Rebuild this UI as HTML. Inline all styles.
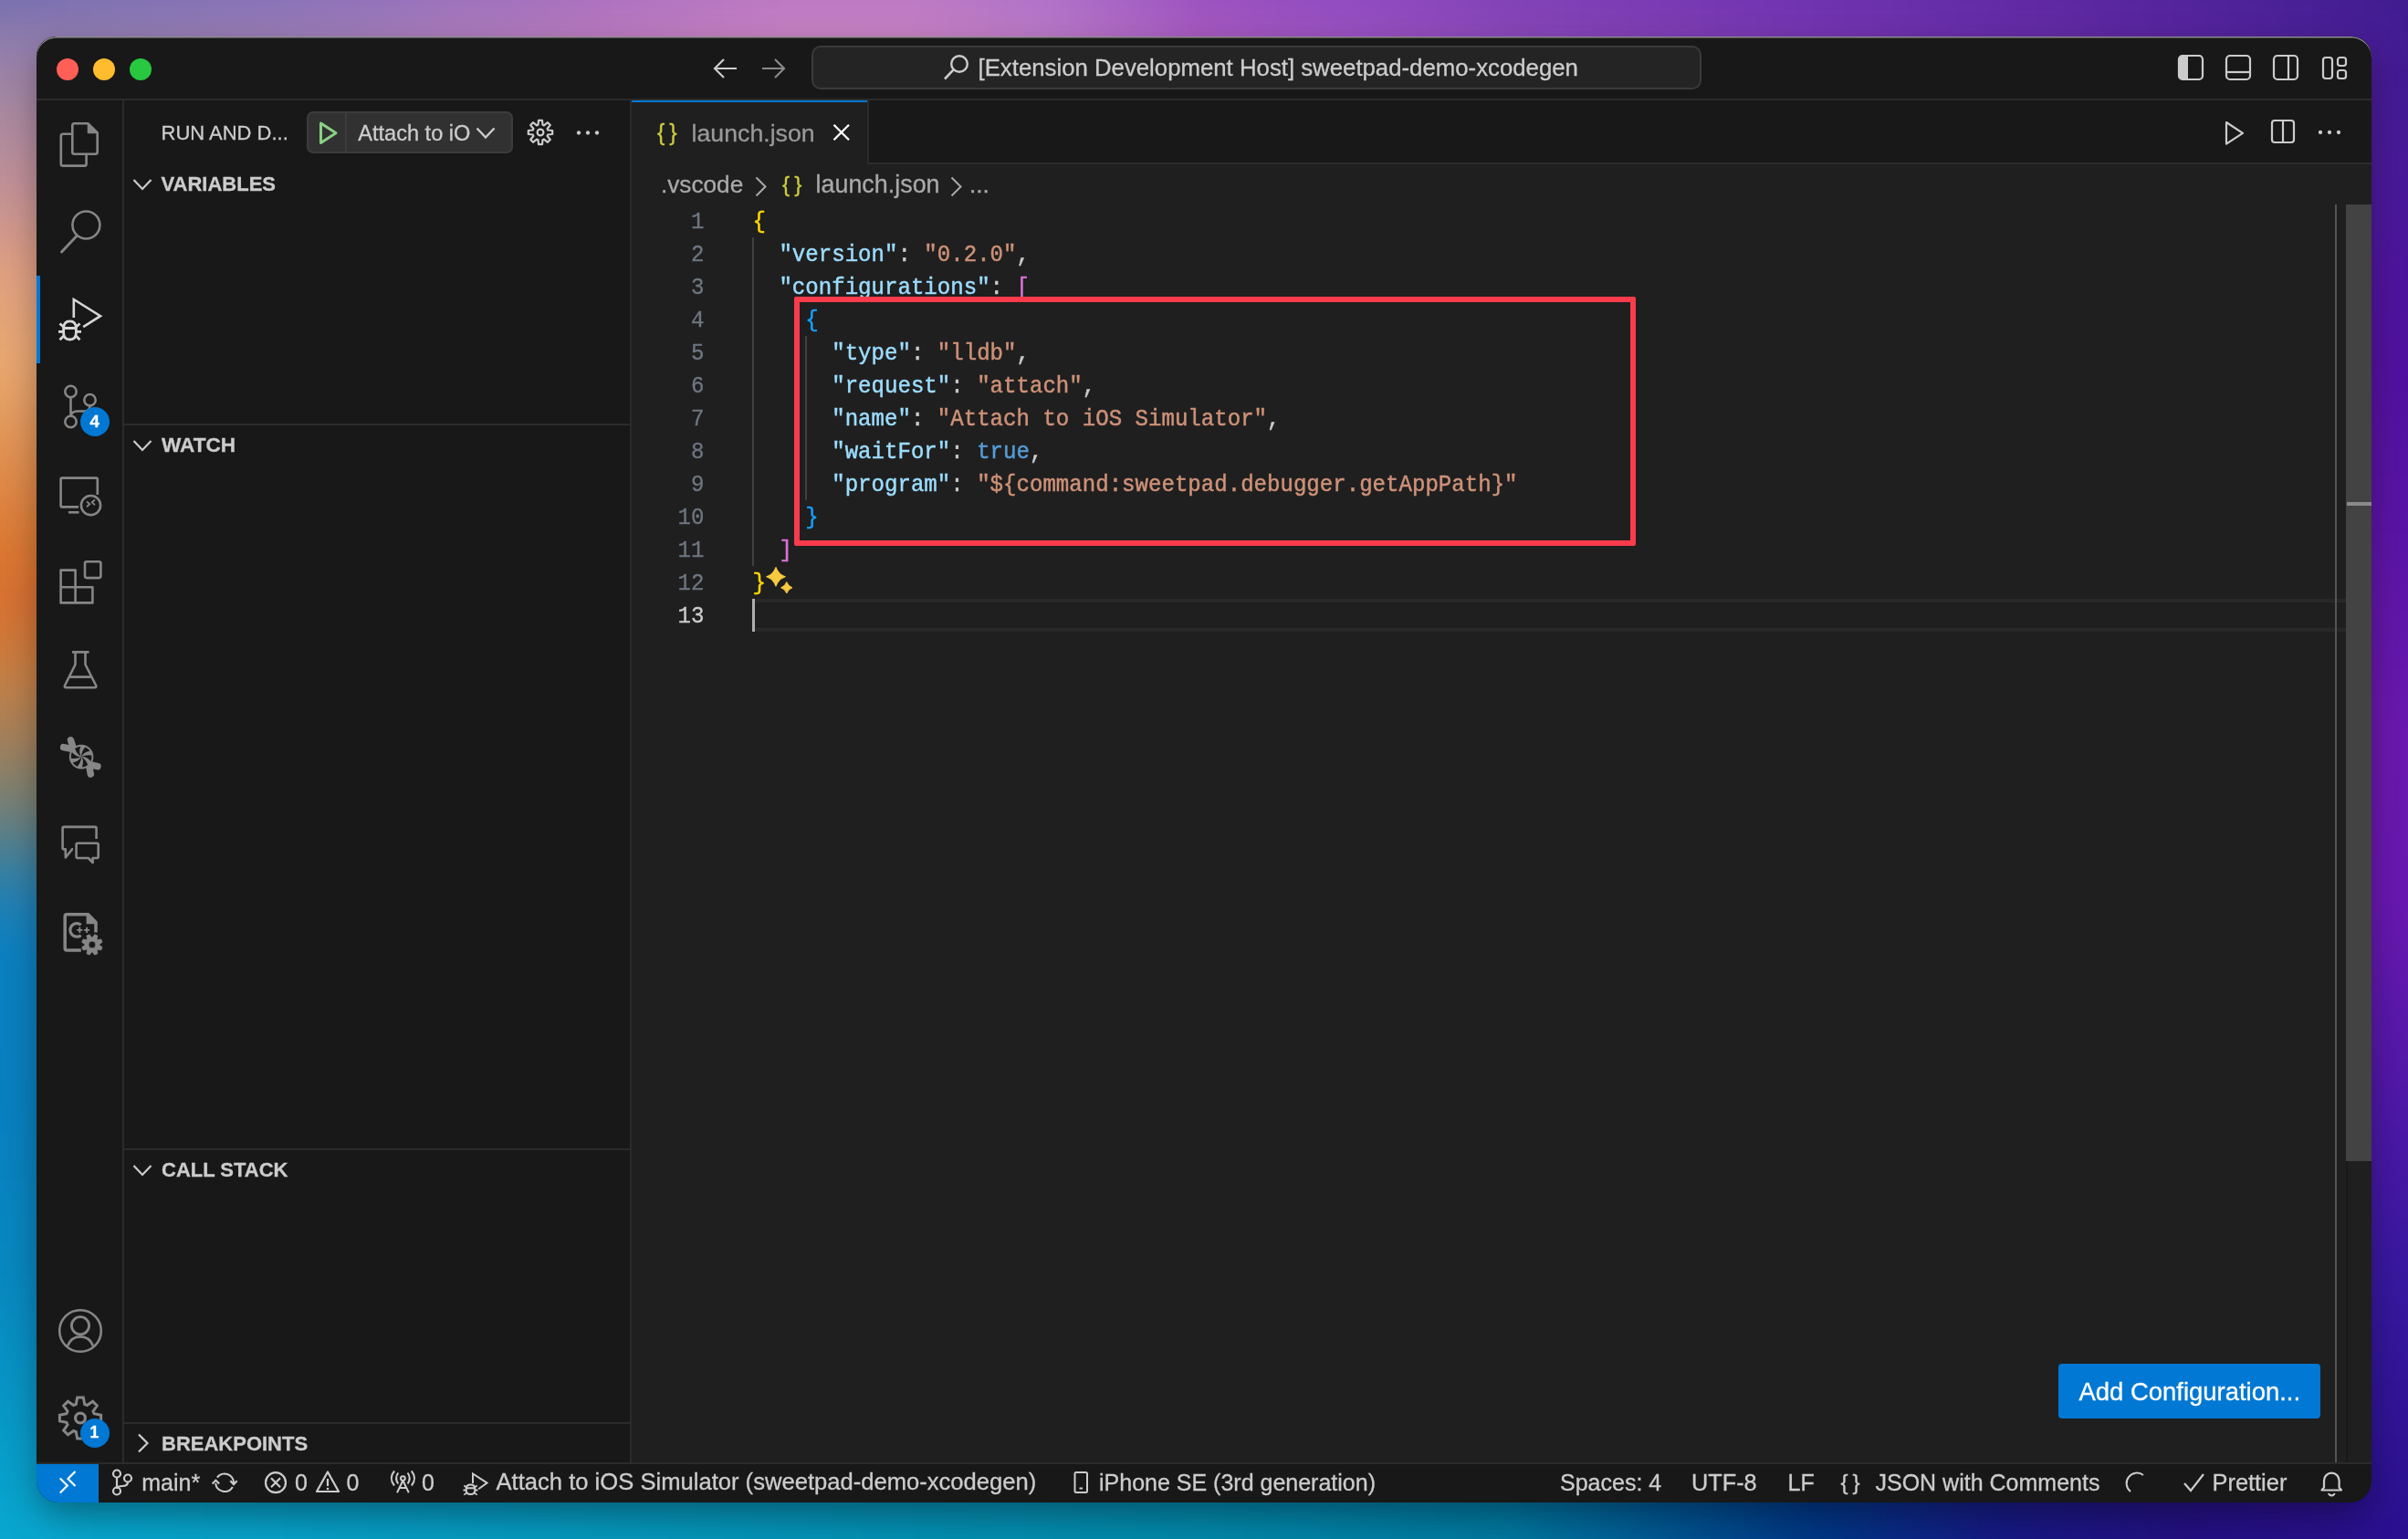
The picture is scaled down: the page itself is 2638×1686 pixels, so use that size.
<!DOCTYPE html><html><head><meta charset="utf-8"><style>html,body{margin:0;padding:0;width:2638px;height:1686px;overflow:hidden;background:#181818}*{box-sizing:border-box}</style></head><body><div style="position:absolute;left:0;top:0;width:2638px;height:1686px;overflow:hidden;background:#601890;">
<svg style="position:absolute;left:-60px;top:-60px;filter:blur(14px)" width="2758" height="1806" viewBox="-60 -60 2758 1806" shape-rendering="crispEdges"><rect x="-48" y="-48" width="30" height="30" fill="#7870b0"/><rect x="-18" y="-48" width="30" height="30" fill="#7870b0"/><rect x="12" y="-48" width="30" height="30" fill="#7970b1"/><rect x="42" y="-48" width="30" height="30" fill="#7b70b1"/><rect x="72" y="-48" width="30" height="30" fill="#7d71b2"/><rect x="102" y="-48" width="30" height="30" fill="#7e71b3"/><rect x="132" y="-48" width="30" height="30" fill="#8071b4"/><rect x="162" y="-48" width="30" height="30" fill="#8271b4"/><rect x="192" y="-48" width="30" height="30" fill="#8372b5"/><rect x="222" y="-48" width="30" height="30" fill="#8572b6"/><rect x="252" y="-48" width="30" height="30" fill="#8772b6"/><rect x="282" y="-48" width="30" height="30" fill="#8872b7"/><rect x="312" y="-48" width="30" height="30" fill="#8a72b8"/><rect x="342" y="-48" width="30" height="30" fill="#8d72b9"/><rect x="372" y="-48" width="30" height="30" fill="#9072b9"/><rect x="402" y="-48" width="30" height="30" fill="#9372ba"/><rect x="432" y="-48" width="30" height="30" fill="#9672bb"/><rect x="462" y="-48" width="30" height="30" fill="#9972bc"/><rect x="492" y="-48" width="30" height="30" fill="#9c72bc"/><rect x="522" y="-48" width="30" height="30" fill="#9f72bd"/><rect x="552" y="-48" width="30" height="30" fill="#a271be"/><rect x="582" y="-48" width="30" height="30" fill="#a671be"/><rect x="612" y="-48" width="30" height="30" fill="#a971bf"/><rect x="642" y="-48" width="30" height="30" fill="#ac71c0"/><rect x="672" y="-48" width="30" height="30" fill="#ae72c1"/><rect x="702" y="-48" width="30" height="30" fill="#b173c1"/><rect x="732" y="-48" width="30" height="30" fill="#b375c2"/><rect x="762" y="-48" width="30" height="30" fill="#b676c2"/><rect x="792" y="-48" width="30" height="30" fill="#b877c3"/><rect x="822" y="-48" width="30" height="30" fill="#bb79c4"/><rect x="852" y="-48" width="30" height="30" fill="#bc79c4"/><rect x="882" y="-48" width="30" height="30" fill="#bc79c4"/><rect x="912" y="-48" width="30" height="30" fill="#bc79c4"/><rect x="942" y="-48" width="30" height="30" fill="#bc79c4"/><rect x="972" y="-48" width="30" height="30" fill="#bc79c4"/><rect x="1002" y="-48" width="30" height="30" fill="#bb79c4"/><rect x="1032" y="-48" width="30" height="30" fill="#b877c5"/><rect x="1062" y="-48" width="30" height="30" fill="#b676c6"/><rect x="1092" y="-48" width="30" height="30" fill="#b374c7"/><rect x="1122" y="-48" width="30" height="30" fill="#b172c8"/><rect x="1152" y="-48" width="30" height="30" fill="#ae6fc7"/><rect x="1182" y="-48" width="30" height="30" fill="#aa69c6"/><rect x="1212" y="-48" width="30" height="30" fill="#a763c4"/><rect x="1242" y="-48" width="30" height="30" fill="#a35ec3"/><rect x="1272" y="-48" width="30" height="30" fill="#a058c2"/><rect x="1302" y="-48" width="30" height="30" fill="#9c53c0"/><rect x="1332" y="-48" width="30" height="30" fill="#9a51c0"/><rect x="1362" y="-48" width="30" height="30" fill="#9850c0"/><rect x="1392" y="-48" width="30" height="30" fill="#964ec0"/><rect x="1422" y="-48" width="30" height="30" fill="#944dc0"/><rect x="1452" y="-48" width="30" height="30" fill="#924cc0"/><rect x="1482" y="-48" width="30" height="30" fill="#904ac0"/><rect x="1512" y="-48" width="30" height="30" fill="#8d49bf"/><rect x="1542" y="-48" width="30" height="30" fill="#8b47bd"/><rect x="1572" y="-48" width="30" height="30" fill="#8846bb"/><rect x="1602" y="-48" width="30" height="30" fill="#8544ba"/><rect x="1632" y="-48" width="30" height="30" fill="#8243b8"/><rect x="1662" y="-48" width="30" height="30" fill="#8141b7"/><rect x="1692" y="-48" width="30" height="30" fill="#7f40b7"/><rect x="1722" y="-48" width="30" height="30" fill="#7d3eb6"/><rect x="1752" y="-48" width="30" height="30" fill="#7c3db5"/><rect x="1782" y="-48" width="30" height="30" fill="#7a3cb4"/><rect x="1812" y="-48" width="30" height="30" fill="#783ab4"/><rect x="1842" y="-48" width="30" height="30" fill="#7739b3"/><rect x="1872" y="-48" width="30" height="30" fill="#7537b2"/><rect x="1902" y="-48" width="30" height="30" fill="#7336b2"/><rect x="1932" y="-48" width="30" height="30" fill="#7235b1"/><rect x="1962" y="-48" width="30" height="30" fill="#7033b0"/><rect x="1992" y="-48" width="30" height="30" fill="#6e32af"/><rect x="2022" y="-48" width="30" height="30" fill="#6c31ad"/><rect x="2052" y="-48" width="30" height="30" fill="#6a30ac"/><rect x="2082" y="-48" width="30" height="30" fill="#682faa"/><rect x="2112" y="-48" width="30" height="30" fill="#662ea9"/><rect x="2142" y="-48" width="30" height="30" fill="#642da7"/><rect x="2172" y="-48" width="30" height="30" fill="#622ca6"/><rect x="2202" y="-48" width="30" height="30" fill="#602aa4"/><rect x="2232" y="-48" width="30" height="30" fill="#5e29a3"/><rect x="2262" y="-48" width="30" height="30" fill="#5c28a1"/><rect x="2292" y="-48" width="30" height="30" fill="#5927a0"/><rect x="2322" y="-48" width="30" height="30" fill="#57269e"/><rect x="2352" y="-48" width="30" height="30" fill="#55259d"/><rect x="2382" y="-48" width="30" height="30" fill="#53249b"/><rect x="2412" y="-48" width="30" height="30" fill="#50239a"/><rect x="2442" y="-48" width="30" height="30" fill="#4e2299"/><rect x="2472" y="-48" width="30" height="30" fill="#4c2197"/><rect x="2502" y="-48" width="30" height="30" fill="#492096"/><rect x="2532" y="-48" width="30" height="30" fill="#471f94"/><rect x="2562" y="-48" width="30" height="30" fill="#451e93"/><rect x="2592" y="-48" width="30" height="30" fill="#421d91"/><rect x="2622" y="-48" width="30" height="30" fill="#401c90"/><rect x="2652" y="-48" width="30" height="30" fill="#401c90"/><rect x="2682" y="-48" width="30" height="30" fill="#401c90"/><rect x="-48" y="-18" width="30" height="30" fill="#7870b0"/><rect x="-18" y="-18" width="30" height="30" fill="#7870b0"/><rect x="12" y="-18" width="30" height="30" fill="#7970b1"/><rect x="42" y="-18" width="30" height="30" fill="#7b70b1"/><rect x="72" y="-18" width="30" height="30" fill="#7d71b2"/><rect x="102" y="-18" width="30" height="30" fill="#7e71b3"/><rect x="132" y="-18" width="30" height="30" fill="#8071b4"/><rect x="162" y="-18" width="30" height="30" fill="#8271b4"/><rect x="192" y="-18" width="30" height="30" fill="#8372b5"/><rect x="222" y="-18" width="30" height="30" fill="#8572b6"/><rect x="252" y="-18" width="30" height="30" fill="#8772b6"/><rect x="282" y="-18" width="30" height="30" fill="#8872b7"/><rect x="312" y="-18" width="30" height="30" fill="#8a72b8"/><rect x="342" y="-18" width="30" height="30" fill="#8d72b9"/><rect x="372" y="-18" width="30" height="30" fill="#9072b9"/><rect x="402" y="-18" width="30" height="30" fill="#9372ba"/><rect x="432" y="-18" width="30" height="30" fill="#9672bb"/><rect x="462" y="-18" width="30" height="30" fill="#9972bc"/><rect x="492" y="-18" width="30" height="30" fill="#9c72bc"/><rect x="522" y="-18" width="30" height="30" fill="#9f72bd"/><rect x="552" y="-18" width="30" height="30" fill="#a271be"/><rect x="582" y="-18" width="30" height="30" fill="#a671be"/><rect x="612" y="-18" width="30" height="30" fill="#a971bf"/><rect x="642" y="-18" width="30" height="30" fill="#ac71c0"/><rect x="672" y="-18" width="30" height="30" fill="#ae72c1"/><rect x="702" y="-18" width="30" height="30" fill="#b173c1"/><rect x="732" y="-18" width="30" height="30" fill="#b375c2"/><rect x="762" y="-18" width="30" height="30" fill="#b676c2"/><rect x="792" y="-18" width="30" height="30" fill="#b877c3"/><rect x="822" y="-18" width="30" height="30" fill="#bb79c4"/><rect x="852" y="-18" width="30" height="30" fill="#bc79c4"/><rect x="882" y="-18" width="30" height="30" fill="#bc79c4"/><rect x="912" y="-18" width="30" height="30" fill="#bc79c4"/><rect x="942" y="-18" width="30" height="30" fill="#bc79c4"/><rect x="972" y="-18" width="30" height="30" fill="#bc79c4"/><rect x="1002" y="-18" width="30" height="30" fill="#bb79c4"/><rect x="1032" y="-18" width="30" height="30" fill="#b877c5"/><rect x="1062" y="-18" width="30" height="30" fill="#b676c6"/><rect x="1092" y="-18" width="30" height="30" fill="#b374c7"/><rect x="1122" y="-18" width="30" height="30" fill="#b172c8"/><rect x="1152" y="-18" width="30" height="30" fill="#ae6fc7"/><rect x="1182" y="-18" width="30" height="30" fill="#aa69c6"/><rect x="1212" y="-18" width="30" height="30" fill="#a763c4"/><rect x="1242" y="-18" width="30" height="30" fill="#a35ec3"/><rect x="1272" y="-18" width="30" height="30" fill="#a058c2"/><rect x="1302" y="-18" width="30" height="30" fill="#9c53c0"/><rect x="1332" y="-18" width="30" height="30" fill="#9a51c0"/><rect x="1362" y="-18" width="30" height="30" fill="#9850c0"/><rect x="1392" y="-18" width="30" height="30" fill="#964ec0"/><rect x="1422" y="-18" width="30" height="30" fill="#944dc0"/><rect x="1452" y="-18" width="30" height="30" fill="#924cc0"/><rect x="1482" y="-18" width="30" height="30" fill="#904ac0"/><rect x="1512" y="-18" width="30" height="30" fill="#8d49bf"/><rect x="1542" y="-18" width="30" height="30" fill="#8b47bd"/><rect x="1572" y="-18" width="30" height="30" fill="#8846bb"/><rect x="1602" y="-18" width="30" height="30" fill="#8544ba"/><rect x="1632" y="-18" width="30" height="30" fill="#8243b8"/><rect x="1662" y="-18" width="30" height="30" fill="#8141b7"/><rect x="1692" y="-18" width="30" height="30" fill="#7f40b7"/><rect x="1722" y="-18" width="30" height="30" fill="#7d3eb6"/><rect x="1752" y="-18" width="30" height="30" fill="#7c3db5"/><rect x="1782" y="-18" width="30" height="30" fill="#7a3cb4"/><rect x="1812" y="-18" width="30" height="30" fill="#783ab4"/><rect x="1842" y="-18" width="30" height="30" fill="#7739b3"/><rect x="1872" y="-18" width="30" height="30" fill="#7537b2"/><rect x="1902" y="-18" width="30" height="30" fill="#7336b2"/><rect x="1932" y="-18" width="30" height="30" fill="#7235b1"/><rect x="1962" y="-18" width="30" height="30" fill="#7033b0"/><rect x="1992" y="-18" width="30" height="30" fill="#6e32af"/><rect x="2022" y="-18" width="30" height="30" fill="#6c31ad"/><rect x="2052" y="-18" width="30" height="30" fill="#6a30ac"/><rect x="2082" y="-18" width="30" height="30" fill="#682faa"/><rect x="2112" y="-18" width="30" height="30" fill="#662ea9"/><rect x="2142" y="-18" width="30" height="30" fill="#642da7"/><rect x="2172" y="-18" width="30" height="30" fill="#622ca6"/><rect x="2202" y="-18" width="30" height="30" fill="#602aa4"/><rect x="2232" y="-18" width="30" height="30" fill="#5e29a3"/><rect x="2262" y="-18" width="30" height="30" fill="#5c28a1"/><rect x="2292" y="-18" width="30" height="30" fill="#5927a0"/><rect x="2322" y="-18" width="30" height="30" fill="#57269e"/><rect x="2352" y="-18" width="30" height="30" fill="#55259d"/><rect x="2382" y="-18" width="30" height="30" fill="#53249b"/><rect x="2412" y="-18" width="30" height="30" fill="#50239a"/><rect x="2442" y="-18" width="30" height="30" fill="#4e2299"/><rect x="2472" y="-18" width="30" height="30" fill="#4c2197"/><rect x="2502" y="-18" width="30" height="30" fill="#492096"/><rect x="2532" y="-18" width="30" height="30" fill="#471f94"/><rect x="2562" y="-18" width="30" height="30" fill="#451e93"/><rect x="2592" y="-18" width="30" height="30" fill="#421d91"/><rect x="2622" y="-18" width="30" height="30" fill="#401c90"/><rect x="2652" y="-18" width="30" height="30" fill="#401c90"/><rect x="2682" y="-18" width="30" height="30" fill="#401c90"/><rect x="-48" y="12" width="30" height="30" fill="#8577ad"/><rect x="-18" y="12" width="30" height="30" fill="#8577ad"/><rect x="12" y="12" width="30" height="30" fill="#8677ae"/><rect x="42" y="12" width="30" height="30" fill="#8777af"/><rect x="72" y="12" width="30" height="30" fill="#8978af"/><rect x="102" y="12" width="30" height="30" fill="#8a78b0"/><rect x="132" y="12" width="30" height="30" fill="#8c78b1"/><rect x="162" y="12" width="30" height="30" fill="#8d78b2"/><rect x="192" y="12" width="30" height="30" fill="#8f78b2"/><rect x="222" y="12" width="30" height="30" fill="#9078b3"/><rect x="252" y="12" width="30" height="30" fill="#9278b4"/><rect x="282" y="12" width="30" height="30" fill="#9379b5"/><rect x="312" y="12" width="30" height="30" fill="#9579b6"/><rect x="342" y="12" width="30" height="30" fill="#9779b6"/><rect x="372" y="12" width="30" height="30" fill="#9a78b7"/><rect x="402" y="12" width="30" height="30" fill="#9d78b8"/><rect x="432" y="12" width="30" height="30" fill="#a078b9"/><rect x="462" y="12" width="30" height="30" fill="#a378b9"/><rect x="492" y="12" width="30" height="30" fill="#a677ba"/><rect x="522" y="12" width="30" height="30" fill="#a977bb"/><rect x="552" y="12" width="30" height="30" fill="#ac77bc"/><rect x="582" y="12" width="30" height="30" fill="#ae77bc"/><rect x="612" y="12" width="30" height="30" fill="#b177bd"/><rect x="642" y="12" width="30" height="30" fill="#b476be"/><rect x="672" y="12" width="30" height="30" fill="#b777be"/><rect x="702" y="12" width="30" height="30" fill="#b979bf"/><rect x="732" y="12" width="30" height="30" fill="#bb7ac0"/><rect x="762" y="12" width="30" height="30" fill="#be7bc0"/><rect x="792" y="12" width="30" height="30" fill="#c07cc1"/><rect x="822" y="12" width="30" height="30" fill="#c27dc2"/><rect x="852" y="12" width="30" height="30" fill="#c37ec2"/><rect x="882" y="12" width="30" height="30" fill="#c37ec2"/><rect x="912" y="12" width="30" height="30" fill="#c37ec2"/><rect x="942" y="12" width="30" height="30" fill="#c37ec2"/><rect x="972" y="12" width="30" height="30" fill="#c37ec2"/><rect x="1002" y="12" width="30" height="30" fill="#c17dc3"/><rect x="1032" y="12" width="30" height="30" fill="#bf7bc4"/><rect x="1062" y="12" width="30" height="30" fill="#bc7ac4"/><rect x="1092" y="12" width="30" height="30" fill="#ba78c5"/><rect x="1122" y="12" width="30" height="30" fill="#b776c6"/><rect x="1152" y="12" width="30" height="30" fill="#b472c6"/><rect x="1182" y="12" width="30" height="30" fill="#b06dc4"/><rect x="1212" y="12" width="30" height="30" fill="#ad67c3"/><rect x="1242" y="12" width="30" height="30" fill="#a962c2"/><rect x="1272" y="12" width="30" height="30" fill="#a55cc0"/><rect x="1302" y="12" width="30" height="30" fill="#a256bf"/><rect x="1332" y="12" width="30" height="30" fill="#a055bf"/><rect x="1362" y="12" width="30" height="30" fill="#9d53bf"/><rect x="1392" y="12" width="30" height="30" fill="#9b52bf"/><rect x="1422" y="12" width="30" height="30" fill="#9951bf"/><rect x="1452" y="12" width="30" height="30" fill="#974fbf"/><rect x="1482" y="12" width="30" height="30" fill="#954ebf"/><rect x="1512" y="12" width="30" height="30" fill="#924cbe"/><rect x="1542" y="12" width="30" height="30" fill="#8f4bbc"/><rect x="1572" y="12" width="30" height="30" fill="#8c49ba"/><rect x="1602" y="12" width="30" height="30" fill="#8947b9"/><rect x="1632" y="12" width="30" height="30" fill="#8646b7"/><rect x="1662" y="12" width="30" height="30" fill="#8544b7"/><rect x="1692" y="12" width="30" height="30" fill="#8343b6"/><rect x="1722" y="12" width="30" height="30" fill="#8141b5"/><rect x="1752" y="12" width="30" height="30" fill="#7f3fb4"/><rect x="1782" y="12" width="30" height="30" fill="#7e3eb4"/><rect x="1812" y="12" width="30" height="30" fill="#7c3cb3"/><rect x="1842" y="12" width="30" height="30" fill="#7a3bb2"/><rect x="1872" y="12" width="30" height="30" fill="#7839b2"/><rect x="1902" y="12" width="30" height="30" fill="#7738b1"/><rect x="1932" y="12" width="30" height="30" fill="#7536b0"/><rect x="1962" y="12" width="30" height="30" fill="#7335b0"/><rect x="1992" y="12" width="30" height="30" fill="#7133ae"/><rect x="2022" y="12" width="30" height="30" fill="#6f32ad"/><rect x="2052" y="12" width="30" height="30" fill="#6d31ab"/><rect x="2082" y="12" width="30" height="30" fill="#6b30aa"/><rect x="2112" y="12" width="30" height="30" fill="#682ea9"/><rect x="2142" y="12" width="30" height="30" fill="#662da7"/><rect x="2172" y="12" width="30" height="30" fill="#642ca6"/><rect x="2202" y="12" width="30" height="30" fill="#622ba4"/><rect x="2232" y="12" width="30" height="30" fill="#602aa3"/><rect x="2262" y="12" width="30" height="30" fill="#5e29a1"/><rect x="2292" y="12" width="30" height="30" fill="#5c27a0"/><rect x="2322" y="12" width="30" height="30" fill="#59269f"/><rect x="2352" y="12" width="30" height="30" fill="#57259d"/><rect x="2382" y="12" width="30" height="30" fill="#54249c"/><rect x="2412" y="12" width="30" height="30" fill="#52239b"/><rect x="2442" y="12" width="30" height="30" fill="#502299"/><rect x="2472" y="12" width="30" height="30" fill="#4d2198"/><rect x="2502" y="12" width="30" height="30" fill="#4b2097"/><rect x="2532" y="12" width="30" height="30" fill="#481f95"/><rect x="2562" y="12" width="30" height="30" fill="#461e94"/><rect x="2592" y="12" width="30" height="30" fill="#441d93"/><rect x="2622" y="12" width="30" height="30" fill="#411b91"/><rect x="2652" y="12" width="30" height="30" fill="#411b91"/><rect x="2682" y="12" width="30" height="30" fill="#411b91"/><rect x="-48" y="42" width="30" height="30" fill="#937faa"/><rect x="-18" y="42" width="30" height="30" fill="#937faa"/><rect x="12" y="42" width="30" height="30" fill="#947fab"/><rect x="42" y="42" width="30" height="30" fill="#957fac"/><rect x="72" y="42" width="30" height="30" fill="#967fad"/><rect x="102" y="42" width="30" height="30" fill="#987fad"/><rect x="132" y="42" width="30" height="30" fill="#997fae"/><rect x="162" y="42" width="30" height="30" fill="#9a7faf"/><rect x="192" y="42" width="30" height="30" fill="#9b7fb0"/><rect x="222" y="42" width="30" height="30" fill="#9d7fb0"/><rect x="252" y="42" width="30" height="30" fill="#9e80b1"/><rect x="282" y="42" width="30" height="30" fill="#9f80b2"/><rect x="312" y="42" width="30" height="30" fill="#a080b3"/><rect x="342" y="42" width="30" height="30" fill="#a37fb4"/><rect x="372" y="42" width="30" height="30" fill="#a67fb4"/><rect x="402" y="42" width="30" height="30" fill="#a87fb5"/><rect x="432" y="42" width="30" height="30" fill="#ab7eb6"/><rect x="462" y="42" width="30" height="30" fill="#ae7eb7"/><rect x="492" y="42" width="30" height="30" fill="#b07eb8"/><rect x="522" y="42" width="30" height="30" fill="#b37db8"/><rect x="552" y="42" width="30" height="30" fill="#b67db9"/><rect x="582" y="42" width="30" height="30" fill="#b87dba"/><rect x="612" y="42" width="30" height="30" fill="#bb7cbb"/><rect x="642" y="42" width="30" height="30" fill="#be7cbb"/><rect x="672" y="42" width="30" height="30" fill="#c07dbc"/><rect x="702" y="42" width="30" height="30" fill="#c27ebd"/><rect x="732" y="42" width="30" height="30" fill="#c47fbd"/><rect x="762" y="42" width="30" height="30" fill="#c680be"/><rect x="792" y="42" width="30" height="30" fill="#c881bf"/><rect x="822" y="42" width="30" height="30" fill="#ca82c0"/><rect x="852" y="42" width="30" height="30" fill="#cb83c0"/><rect x="882" y="42" width="30" height="30" fill="#cb83c0"/><rect x="912" y="42" width="30" height="30" fill="#cb83c0"/><rect x="942" y="42" width="30" height="30" fill="#ca82c0"/><rect x="972" y="42" width="30" height="30" fill="#ca82c0"/><rect x="1002" y="42" width="30" height="30" fill="#c881c1"/><rect x="1032" y="42" width="30" height="30" fill="#c680c2"/><rect x="1062" y="42" width="30" height="30" fill="#c37ec2"/><rect x="1092" y="42" width="30" height="30" fill="#c07cc3"/><rect x="1122" y="42" width="30" height="30" fill="#be7bc4"/><rect x="1152" y="42" width="30" height="30" fill="#ba77c4"/><rect x="1182" y="42" width="30" height="30" fill="#b771c2"/><rect x="1212" y="42" width="30" height="30" fill="#b36bc1"/><rect x="1242" y="42" width="30" height="30" fill="#af66c0"/><rect x="1272" y="42" width="30" height="30" fill="#ac60bf"/><rect x="1302" y="42" width="30" height="30" fill="#a85bbd"/><rect x="1332" y="42" width="30" height="30" fill="#a559bd"/><rect x="1362" y="42" width="30" height="30" fill="#a357bd"/><rect x="1392" y="42" width="30" height="30" fill="#a156bd"/><rect x="1422" y="42" width="30" height="30" fill="#9f54be"/><rect x="1452" y="42" width="30" height="30" fill="#9c53be"/><rect x="1482" y="42" width="30" height="30" fill="#9a52be"/><rect x="1512" y="42" width="30" height="30" fill="#9750bc"/><rect x="1542" y="42" width="30" height="30" fill="#944ebb"/><rect x="1572" y="42" width="30" height="30" fill="#914cb9"/><rect x="1602" y="42" width="30" height="30" fill="#8e4bb8"/><rect x="1632" y="42" width="30" height="30" fill="#8b49b7"/><rect x="1662" y="42" width="30" height="30" fill="#8947b6"/><rect x="1692" y="42" width="30" height="30" fill="#8746b5"/><rect x="1722" y="42" width="30" height="30" fill="#8544b4"/><rect x="1752" y="42" width="30" height="30" fill="#8342b4"/><rect x="1782" y="42" width="30" height="30" fill="#8240b3"/><rect x="1812" y="42" width="30" height="30" fill="#803fb2"/><rect x="1842" y="42" width="30" height="30" fill="#7e3db2"/><rect x="1872" y="42" width="30" height="30" fill="#7c3bb1"/><rect x="1902" y="42" width="30" height="30" fill="#7a3ab0"/><rect x="1932" y="42" width="30" height="30" fill="#7838b0"/><rect x="1962" y="42" width="30" height="30" fill="#7636af"/><rect x="1992" y="42" width="30" height="30" fill="#7435ae"/><rect x="2022" y="42" width="30" height="30" fill="#7233ac"/><rect x="2052" y="42" width="30" height="30" fill="#7032ab"/><rect x="2082" y="42" width="30" height="30" fill="#6d31aa"/><rect x="2112" y="42" width="30" height="30" fill="#6b2fa8"/><rect x="2142" y="42" width="30" height="30" fill="#692ea7"/><rect x="2172" y="42" width="30" height="30" fill="#672da6"/><rect x="2202" y="42" width="30" height="30" fill="#652ba4"/><rect x="2232" y="42" width="30" height="30" fill="#622aa3"/><rect x="2262" y="42" width="30" height="30" fill="#6029a2"/><rect x="2292" y="42" width="30" height="30" fill="#5e28a0"/><rect x="2322" y="42" width="30" height="30" fill="#5b269f"/><rect x="2352" y="42" width="30" height="30" fill="#59259e"/><rect x="2382" y="42" width="30" height="30" fill="#56249d"/><rect x="2412" y="42" width="30" height="30" fill="#54239b"/><rect x="2442" y="42" width="30" height="30" fill="#51229a"/><rect x="2472" y="42" width="30" height="30" fill="#4f2199"/><rect x="2502" y="42" width="30" height="30" fill="#4c1f98"/><rect x="2532" y="42" width="30" height="30" fill="#4a1e96"/><rect x="2562" y="42" width="30" height="30" fill="#471d95"/><rect x="2592" y="42" width="30" height="30" fill="#451c94"/><rect x="2622" y="42" width="30" height="30" fill="#421b93"/><rect x="2652" y="42" width="30" height="30" fill="#421b93"/><rect x="2682" y="42" width="30" height="30" fill="#421b93"/><rect x="-48" y="72" width="30" height="30" fill="#9d84a5"/><rect x="-18" y="72" width="30" height="30" fill="#9d84a5"/><rect x="12" y="72" width="30" height="30" fill="#9e84a6"/><rect x="42" y="72" width="30" height="30" fill="#9f84a7"/><rect x="72" y="72" width="30" height="30" fill="#a084a8"/><rect x="102" y="72" width="30" height="30" fill="#a184a9"/><rect x="132" y="72" width="30" height="30" fill="#a283aa"/><rect x="162" y="72" width="30" height="30" fill="#a483aa"/><rect x="192" y="72" width="30" height="30" fill="#a583ab"/><rect x="222" y="72" width="30" height="30" fill="#a683ac"/><rect x="252" y="72" width="30" height="30" fill="#a783ad"/><rect x="282" y="72" width="30" height="30" fill="#a883ae"/><rect x="312" y="72" width="30" height="30" fill="#a983af"/><rect x="342" y="72" width="30" height="30" fill="#ab83af"/><rect x="372" y="72" width="30" height="30" fill="#ae83b0"/><rect x="402" y="72" width="30" height="30" fill="#b082b1"/><rect x="432" y="72" width="30" height="30" fill="#b382b2"/><rect x="462" y="72" width="30" height="30" fill="#b582b3"/><rect x="492" y="72" width="30" height="30" fill="#b881b4"/><rect x="522" y="72" width="30" height="30" fill="#ba81b4"/><rect x="552" y="72" width="30" height="30" fill="#bd80b5"/><rect x="582" y="72" width="30" height="30" fill="#bf80b6"/><rect x="612" y="72" width="30" height="30" fill="#c280b7"/><rect x="642" y="72" width="30" height="30" fill="#c47fb8"/><rect x="672" y="72" width="30" height="30" fill="#c680b8"/><rect x="702" y="72" width="30" height="30" fill="#c881b9"/><rect x="732" y="72" width="30" height="30" fill="#ca82ba"/><rect x="762" y="72" width="30" height="30" fill="#cc83bb"/><rect x="792" y="72" width="30" height="30" fill="#ce84bb"/><rect x="822" y="72" width="30" height="30" fill="#d085bc"/><rect x="852" y="72" width="30" height="30" fill="#d185bd"/><rect x="882" y="72" width="30" height="30" fill="#d085bd"/><rect x="912" y="72" width="30" height="30" fill="#d085bd"/><rect x="942" y="72" width="30" height="30" fill="#cf85bd"/><rect x="972" y="72" width="30" height="30" fill="#cf85bd"/><rect x="1002" y="72" width="30" height="30" fill="#cd84be"/><rect x="1032" y="72" width="30" height="30" fill="#ca82bf"/><rect x="1062" y="72" width="30" height="30" fill="#c880bf"/><rect x="1092" y="72" width="30" height="30" fill="#c57ec0"/><rect x="1122" y="72" width="30" height="30" fill="#c27dc1"/><rect x="1152" y="72" width="30" height="30" fill="#bf79c1"/><rect x="1182" y="72" width="30" height="30" fill="#bb73c0"/><rect x="1212" y="72" width="30" height="30" fill="#b76ebf"/><rect x="1242" y="72" width="30" height="30" fill="#b468bd"/><rect x="1272" y="72" width="30" height="30" fill="#b063bc"/><rect x="1302" y="72" width="30" height="30" fill="#ac5dbb"/><rect x="1332" y="72" width="30" height="30" fill="#aa5bbb"/><rect x="1362" y="72" width="30" height="30" fill="#a75abb"/><rect x="1392" y="72" width="30" height="30" fill="#a558bb"/><rect x="1422" y="72" width="30" height="30" fill="#a357bb"/><rect x="1452" y="72" width="30" height="30" fill="#a055bc"/><rect x="1482" y="72" width="30" height="30" fill="#9e54bc"/><rect x="1512" y="72" width="30" height="30" fill="#9b52ba"/><rect x="1542" y="72" width="30" height="30" fill="#9850b9"/><rect x="1572" y="72" width="30" height="30" fill="#954eb8"/><rect x="1602" y="72" width="30" height="30" fill="#924db6"/><rect x="1632" y="72" width="30" height="30" fill="#8e4bb5"/><rect x="1662" y="72" width="30" height="30" fill="#8c49b4"/><rect x="1692" y="72" width="30" height="30" fill="#8a47b4"/><rect x="1722" y="72" width="30" height="30" fill="#8845b3"/><rect x="1752" y="72" width="30" height="30" fill="#8644b2"/><rect x="1782" y="72" width="30" height="30" fill="#8442b2"/><rect x="1812" y="72" width="30" height="30" fill="#8240b1"/><rect x="1842" y="72" width="30" height="30" fill="#803eb1"/><rect x="1872" y="72" width="30" height="30" fill="#7e3cb0"/><rect x="1902" y="72" width="30" height="30" fill="#7c3aaf"/><rect x="1932" y="72" width="30" height="30" fill="#7a39af"/><rect x="1962" y="72" width="30" height="30" fill="#7837ae"/><rect x="1992" y="72" width="30" height="30" fill="#7635ad"/><rect x="2022" y="72" width="30" height="30" fill="#7434ac"/><rect x="2052" y="72" width="30" height="30" fill="#7232aa"/><rect x="2082" y="72" width="30" height="30" fill="#7031a9"/><rect x="2112" y="72" width="30" height="30" fill="#6d2fa8"/><rect x="2142" y="72" width="30" height="30" fill="#6b2ea7"/><rect x="2172" y="72" width="30" height="30" fill="#692da5"/><rect x="2202" y="72" width="30" height="30" fill="#672ba4"/><rect x="2232" y="72" width="30" height="30" fill="#642aa3"/><rect x="2262" y="72" width="30" height="30" fill="#6229a2"/><rect x="2292" y="72" width="30" height="30" fill="#6027a0"/><rect x="2322" y="72" width="30" height="30" fill="#5d269f"/><rect x="2352" y="72" width="30" height="30" fill="#5b259e"/><rect x="2382" y="72" width="30" height="30" fill="#58249d"/><rect x="2412" y="72" width="30" height="30" fill="#56229c"/><rect x="2442" y="72" width="30" height="30" fill="#53219b"/><rect x="2472" y="72" width="30" height="30" fill="#50209a"/><rect x="2502" y="72" width="30" height="30" fill="#4e1f99"/><rect x="2532" y="72" width="30" height="30" fill="#4b1e98"/><rect x="2562" y="72" width="30" height="30" fill="#491d97"/><rect x="2592" y="72" width="30" height="30" fill="#461b95"/><rect x="2622" y="72" width="30" height="30" fill="#441a94"/><rect x="2652" y="72" width="30" height="30" fill="#431a94"/><rect x="2682" y="72" width="30" height="30" fill="#431a94"/><rect x="-48" y="102" width="30" height="30" fill="#a788a0"/><rect x="-18" y="102" width="30" height="30" fill="#a788a0"/><rect x="12" y="102" width="30" height="30" fill="#a888a1"/><rect x="42" y="102" width="30" height="30" fill="#a987a2"/><rect x="72" y="102" width="30" height="30" fill="#aa87a3"/><rect x="2532" y="102" width="30" height="30" fill="#4d1d99"/><rect x="2562" y="102" width="30" height="30" fill="#4a1c98"/><rect x="2592" y="102" width="30" height="30" fill="#471b97"/><rect x="2622" y="102" width="30" height="30" fill="#451a96"/><rect x="2652" y="102" width="30" height="30" fill="#451a96"/><rect x="2682" y="102" width="30" height="30" fill="#451a96"/><rect x="-48" y="132" width="30" height="30" fill="#b08b9d"/><rect x="-18" y="132" width="30" height="30" fill="#b08b9d"/><rect x="12" y="132" width="30" height="30" fill="#b18b9e"/><rect x="42" y="132" width="30" height="30" fill="#b28a9f"/><rect x="72" y="132" width="30" height="30" fill="#b28aa0"/><rect x="2532" y="132" width="30" height="30" fill="#4e1d9a"/><rect x="2562" y="132" width="30" height="30" fill="#4b1c99"/><rect x="2592" y="132" width="30" height="30" fill="#491a98"/><rect x="2622" y="132" width="30" height="30" fill="#461997"/><rect x="2652" y="132" width="30" height="30" fill="#461997"/><rect x="2682" y="132" width="30" height="30" fill="#461997"/><rect x="-48" y="162" width="30" height="30" fill="#b98e9a"/><rect x="-18" y="162" width="30" height="30" fill="#b98e9a"/><rect x="12" y="162" width="30" height="30" fill="#ba8e9b"/><rect x="42" y="162" width="30" height="30" fill="#ba8d9c"/><rect x="72" y="162" width="30" height="30" fill="#bb8d9d"/><rect x="2532" y="162" width="30" height="30" fill="#4f1c9b"/><rect x="2562" y="162" width="30" height="30" fill="#4d1b9a"/><rect x="2592" y="162" width="30" height="30" fill="#4a1a9a"/><rect x="2622" y="162" width="30" height="30" fill="#471999"/><rect x="2652" y="162" width="30" height="30" fill="#471899"/><rect x="2682" y="162" width="30" height="30" fill="#471899"/><rect x="-48" y="192" width="30" height="30" fill="#c29196"/><rect x="-18" y="192" width="30" height="30" fill="#c29196"/><rect x="12" y="192" width="30" height="30" fill="#c39197"/><rect x="42" y="192" width="30" height="30" fill="#c39198"/><rect x="72" y="192" width="30" height="30" fill="#c49099"/><rect x="2532" y="192" width="30" height="30" fill="#511b9c"/><rect x="2562" y="192" width="30" height="30" fill="#4e1a9b"/><rect x="2592" y="192" width="30" height="30" fill="#4b199b"/><rect x="2622" y="192" width="30" height="30" fill="#48189a"/><rect x="2652" y="192" width="30" height="30" fill="#48189a"/><rect x="2682" y="192" width="30" height="30" fill="#48189a"/><rect x="-48" y="222" width="30" height="30" fill="#cc968f"/><rect x="-18" y="222" width="30" height="30" fill="#cc968f"/><rect x="12" y="222" width="30" height="30" fill="#cc9690"/><rect x="42" y="222" width="30" height="30" fill="#cd9591"/><rect x="72" y="222" width="30" height="30" fill="#cd9592"/><rect x="2532" y="222" width="30" height="30" fill="#521a9c"/><rect x="2562" y="222" width="30" height="30" fill="#4f199c"/><rect x="2592" y="222" width="30" height="30" fill="#4c189c"/><rect x="2622" y="222" width="30" height="30" fill="#4a179b"/><rect x="2652" y="222" width="30" height="30" fill="#49179b"/><rect x="2682" y="222" width="30" height="30" fill="#49179b"/><rect x="-48" y="252" width="30" height="30" fill="#d59b88"/><rect x="-18" y="252" width="30" height="30" fill="#d59b88"/><rect x="12" y="252" width="30" height="30" fill="#d69a89"/><rect x="42" y="252" width="30" height="30" fill="#d69a8a"/><rect x="72" y="252" width="30" height="30" fill="#d69a8b"/><rect x="2532" y="252" width="30" height="30" fill="#54199d"/><rect x="2562" y="252" width="30" height="30" fill="#51189d"/><rect x="2592" y="252" width="30" height="30" fill="#4e179c"/><rect x="2622" y="252" width="30" height="30" fill="#4b159c"/><rect x="2652" y="252" width="30" height="30" fill="#4b159c"/><rect x="2682" y="252" width="30" height="30" fill="#4b159c"/><rect x="-48" y="282" width="30" height="30" fill="#dfa081"/><rect x="-18" y="282" width="30" height="30" fill="#dfa081"/><rect x="12" y="282" width="30" height="30" fill="#df9f82"/><rect x="42" y="282" width="30" height="30" fill="#df9f83"/><rect x="72" y="282" width="30" height="30" fill="#df9e84"/><rect x="2532" y="282" width="30" height="30" fill="#55189d"/><rect x="2562" y="282" width="30" height="30" fill="#52179d"/><rect x="2592" y="282" width="30" height="30" fill="#4f159d"/><rect x="2622" y="282" width="30" height="30" fill="#4c149d"/><rect x="2652" y="282" width="30" height="30" fill="#4c149d"/><rect x="2682" y="282" width="30" height="30" fill="#4c149d"/><rect x="-48" y="312" width="30" height="30" fill="#e2a27c"/><rect x="-18" y="312" width="30" height="30" fill="#e2a27c"/><rect x="12" y="312" width="30" height="30" fill="#e2a27d"/><rect x="42" y="312" width="30" height="30" fill="#e2a17e"/><rect x="72" y="312" width="30" height="30" fill="#e2a17f"/><rect x="2532" y="312" width="30" height="30" fill="#56179e"/><rect x="2562" y="312" width="30" height="30" fill="#53169e"/><rect x="2592" y="312" width="30" height="30" fill="#50149e"/><rect x="2622" y="312" width="30" height="30" fill="#4d139e"/><rect x="2652" y="312" width="30" height="30" fill="#4d139e"/><rect x="2682" y="312" width="30" height="30" fill="#4d139e"/><rect x="-48" y="342" width="30" height="30" fill="#e5a577"/><rect x="-18" y="342" width="30" height="30" fill="#e5a577"/><rect x="12" y="342" width="30" height="30" fill="#e5a478"/><rect x="42" y="342" width="30" height="30" fill="#e4a479"/><rect x="72" y="342" width="30" height="30" fill="#e4a37b"/><rect x="2532" y="342" width="30" height="30" fill="#57169e"/><rect x="2562" y="342" width="30" height="30" fill="#54149e"/><rect x="2592" y="342" width="30" height="30" fill="#51139f"/><rect x="2622" y="342" width="30" height="30" fill="#4e129f"/><rect x="2652" y="342" width="30" height="30" fill="#4e129f"/><rect x="2682" y="342" width="30" height="30" fill="#4e129f"/><rect x="-48" y="372" width="30" height="30" fill="#e7a772"/><rect x="-18" y="372" width="30" height="30" fill="#e7a772"/><rect x="12" y="372" width="30" height="30" fill="#e7a673"/><rect x="42" y="372" width="30" height="30" fill="#e7a675"/><rect x="72" y="372" width="30" height="30" fill="#e7a576"/><rect x="2532" y="372" width="30" height="30" fill="#58159f"/><rect x="2562" y="372" width="30" height="30" fill="#55139f"/><rect x="2592" y="372" width="30" height="30" fill="#52129f"/><rect x="2622" y="372" width="30" height="30" fill="#5011a0"/><rect x="2652" y="372" width="30" height="30" fill="#4f11a0"/><rect x="2682" y="372" width="30" height="30" fill="#4f11a0"/><rect x="-48" y="402" width="30" height="30" fill="#e7a46b"/><rect x="-18" y="402" width="30" height="30" fill="#e7a46b"/><rect x="12" y="402" width="30" height="30" fill="#e7a36c"/><rect x="42" y="402" width="30" height="30" fill="#e6a36d"/><rect x="72" y="402" width="30" height="30" fill="#e6a26f"/><rect x="2532" y="402" width="30" height="30" fill="#59149f"/><rect x="2562" y="402" width="30" height="30" fill="#5713a0"/><rect x="2592" y="402" width="30" height="30" fill="#5412a0"/><rect x="2622" y="402" width="30" height="30" fill="#5110a1"/><rect x="2652" y="402" width="30" height="30" fill="#5110a1"/><rect x="2682" y="402" width="30" height="30" fill="#5110a1"/><rect x="-48" y="432" width="30" height="30" fill="#e49d61"/><rect x="-18" y="432" width="30" height="30" fill="#e49d61"/><rect x="12" y="432" width="30" height="30" fill="#e49c62"/><rect x="42" y="432" width="30" height="30" fill="#e49c64"/><rect x="72" y="432" width="30" height="30" fill="#e49b65"/><rect x="2532" y="432" width="30" height="30" fill="#5b15a0"/><rect x="2562" y="432" width="30" height="30" fill="#5813a1"/><rect x="2592" y="432" width="30" height="30" fill="#5512a1"/><rect x="2622" y="432" width="30" height="30" fill="#5211a2"/><rect x="2652" y="432" width="30" height="30" fill="#5211a2"/><rect x="2682" y="432" width="30" height="30" fill="#5211a2"/><rect x="-48" y="462" width="30" height="30" fill="#e29657"/><rect x="-18" y="462" width="30" height="30" fill="#e29657"/><rect x="12" y="462" width="30" height="30" fill="#e29559"/><rect x="42" y="462" width="30" height="30" fill="#e2955a"/><rect x="72" y="462" width="30" height="30" fill="#e1945c"/><rect x="2532" y="462" width="30" height="30" fill="#5c15a1"/><rect x="2562" y="462" width="30" height="30" fill="#5914a1"/><rect x="2592" y="462" width="30" height="30" fill="#5713a2"/><rect x="2622" y="462" width="30" height="30" fill="#5412a3"/><rect x="2652" y="462" width="30" height="30" fill="#5412a3"/><rect x="2682" y="462" width="30" height="30" fill="#5412a3"/><rect x="-48" y="492" width="30" height="30" fill="#e08e4e"/><rect x="-18" y="492" width="30" height="30" fill="#e08e4e"/><rect x="12" y="492" width="30" height="30" fill="#e08e4f"/><rect x="42" y="492" width="30" height="30" fill="#df8e51"/><rect x="72" y="492" width="30" height="30" fill="#df8d53"/><rect x="2532" y="492" width="30" height="30" fill="#5d15a1"/><rect x="2562" y="492" width="30" height="30" fill="#5b14a2"/><rect x="2592" y="492" width="30" height="30" fill="#5813a3"/><rect x="2622" y="492" width="30" height="30" fill="#5512a4"/><rect x="2652" y="492" width="30" height="30" fill="#5512a4"/><rect x="2682" y="492" width="30" height="30" fill="#5512a4"/><rect x="-48" y="522" width="30" height="30" fill="#df8745"/><rect x="-18" y="522" width="30" height="30" fill="#df8745"/><rect x="12" y="522" width="30" height="30" fill="#de8747"/><rect x="42" y="522" width="30" height="30" fill="#de8748"/><rect x="72" y="522" width="30" height="30" fill="#de874a"/><rect x="2532" y="522" width="30" height="30" fill="#5f15a2"/><rect x="2562" y="522" width="30" height="30" fill="#5c14a3"/><rect x="2592" y="522" width="30" height="30" fill="#5914a4"/><rect x="2622" y="522" width="30" height="30" fill="#5713a5"/><rect x="2652" y="522" width="30" height="30" fill="#5713a5"/><rect x="2682" y="522" width="30" height="30" fill="#5713a5"/><rect x="-48" y="552" width="30" height="30" fill="#dd803c"/><rect x="-18" y="552" width="30" height="30" fill="#dd803c"/><rect x="12" y="552" width="30" height="30" fill="#dd803e"/><rect x="42" y="552" width="30" height="30" fill="#dd803f"/><rect x="72" y="552" width="30" height="30" fill="#dd8041"/><rect x="2532" y="552" width="30" height="30" fill="#6015a3"/><rect x="2562" y="552" width="30" height="30" fill="#5d15a4"/><rect x="2592" y="552" width="30" height="30" fill="#5b14a5"/><rect x="2622" y="552" width="30" height="30" fill="#5813a7"/><rect x="2652" y="552" width="30" height="30" fill="#5813a7"/><rect x="2682" y="552" width="30" height="30" fill="#5813a7"/><rect x="-48" y="582" width="30" height="30" fill="#dc7933"/><rect x="-18" y="582" width="30" height="30" fill="#dc7933"/><rect x="12" y="582" width="30" height="30" fill="#dc7935"/><rect x="42" y="582" width="30" height="30" fill="#dc7937"/><rect x="72" y="582" width="30" height="30" fill="#dc7939"/><rect x="2532" y="582" width="30" height="30" fill="#6116a3"/><rect x="2562" y="582" width="30" height="30" fill="#5f15a5"/><rect x="2592" y="582" width="30" height="30" fill="#5c15a6"/><rect x="2622" y="582" width="30" height="30" fill="#5a14a8"/><rect x="2652" y="582" width="30" height="30" fill="#5a14a8"/><rect x="2682" y="582" width="30" height="30" fill="#5a14a8"/><rect x="-48" y="612" width="30" height="30" fill="#da7431"/><rect x="-18" y="612" width="30" height="30" fill="#da7431"/><rect x="12" y="612" width="30" height="30" fill="#da7433"/><rect x="42" y="612" width="30" height="30" fill="#d97435"/><rect x="72" y="612" width="30" height="30" fill="#d97437"/><rect x="2532" y="612" width="30" height="30" fill="#6316a4"/><rect x="2562" y="612" width="30" height="30" fill="#6116a6"/><rect x="2592" y="612" width="30" height="30" fill="#5f15a7"/><rect x="2622" y="612" width="30" height="30" fill="#5c15a9"/><rect x="2652" y="612" width="30" height="30" fill="#5c15a9"/><rect x="2682" y="612" width="30" height="30" fill="#5c15a9"/><rect x="-48" y="642" width="30" height="30" fill="#d77131"/><rect x="-18" y="642" width="30" height="30" fill="#d77131"/><rect x="12" y="642" width="30" height="30" fill="#d77133"/><rect x="42" y="642" width="30" height="30" fill="#d77135"/><rect x="72" y="642" width="30" height="30" fill="#d67137"/><rect x="2532" y="642" width="30" height="30" fill="#6516a5"/><rect x="2562" y="642" width="30" height="30" fill="#6316a7"/><rect x="2592" y="642" width="30" height="30" fill="#6116a8"/><rect x="2622" y="642" width="30" height="30" fill="#5f15aa"/><rect x="2652" y="642" width="30" height="30" fill="#5f15aa"/><rect x="2682" y="642" width="30" height="30" fill="#5f15aa"/><rect x="-48" y="672" width="30" height="30" fill="#d27636"/><rect x="-18" y="672" width="30" height="30" fill="#d27636"/><rect x="12" y="672" width="30" height="30" fill="#d27638"/><rect x="42" y="672" width="30" height="30" fill="#d2763a"/><rect x="72" y="672" width="30" height="30" fill="#d2763b"/><rect x="2532" y="672" width="30" height="30" fill="#6717a6"/><rect x="2562" y="672" width="30" height="30" fill="#6517a8"/><rect x="2592" y="672" width="30" height="30" fill="#6316aa"/><rect x="2622" y="672" width="30" height="30" fill="#6116ab"/><rect x="2652" y="672" width="30" height="30" fill="#6116ab"/><rect x="2682" y="672" width="30" height="30" fill="#6116ab"/><rect x="-48" y="702" width="30" height="30" fill="#cb7b3d"/><rect x="-18" y="702" width="30" height="30" fill="#cb7b3d"/><rect x="12" y="702" width="30" height="30" fill="#ca7b3f"/><rect x="42" y="702" width="30" height="30" fill="#ca7b41"/><rect x="72" y="702" width="30" height="30" fill="#ca7b43"/><rect x="2532" y="702" width="30" height="30" fill="#6918a7"/><rect x="2562" y="702" width="30" height="30" fill="#6717a9"/><rect x="2592" y="702" width="30" height="30" fill="#6517ab"/><rect x="2622" y="702" width="30" height="30" fill="#6316ad"/><rect x="2652" y="702" width="30" height="30" fill="#6316ad"/><rect x="2682" y="702" width="30" height="30" fill="#6316ad"/><rect x="-48" y="732" width="30" height="30" fill="#c18047"/><rect x="-18" y="732" width="30" height="30" fill="#c18047"/><rect x="12" y="732" width="30" height="30" fill="#c17f49"/><rect x="42" y="732" width="30" height="30" fill="#c17f4a"/><rect x="72" y="732" width="30" height="30" fill="#c17f4c"/><rect x="2532" y="732" width="30" height="30" fill="#6b18a9"/><rect x="2562" y="732" width="30" height="30" fill="#6918aa"/><rect x="2592" y="732" width="30" height="30" fill="#6817ac"/><rect x="2622" y="732" width="30" height="30" fill="#6617ae"/><rect x="2652" y="732" width="30" height="30" fill="#6617ae"/><rect x="2682" y="732" width="30" height="30" fill="#6617ae"/><rect x="-48" y="762" width="30" height="30" fill="#b38051"/><rect x="-18" y="762" width="30" height="30" fill="#b38051"/><rect x="12" y="762" width="30" height="30" fill="#b38052"/><rect x="42" y="762" width="30" height="30" fill="#b38054"/><rect x="72" y="762" width="30" height="30" fill="#b38055"/><rect x="2532" y="762" width="30" height="30" fill="#6d19aa"/><rect x="2562" y="762" width="30" height="30" fill="#6b18ac"/><rect x="2592" y="762" width="30" height="30" fill="#6a18ad"/><rect x="2622" y="762" width="30" height="30" fill="#6818af"/><rect x="2652" y="762" width="30" height="30" fill="#6818af"/><rect x="2682" y="762" width="30" height="30" fill="#6818af"/><rect x="-48" y="792" width="30" height="30" fill="#a4805a"/><rect x="-18" y="792" width="30" height="30" fill="#a4805a"/><rect x="12" y="792" width="30" height="30" fill="#a4805c"/><rect x="42" y="792" width="30" height="30" fill="#a4805d"/><rect x="72" y="792" width="30" height="30" fill="#a5805e"/><rect x="2532" y="792" width="30" height="30" fill="#6e19ab"/><rect x="2562" y="792" width="30" height="30" fill="#6d19ad"/><rect x="2592" y="792" width="30" height="30" fill="#6b18ae"/><rect x="2622" y="792" width="30" height="30" fill="#6a18b0"/><rect x="2652" y="792" width="30" height="30" fill="#6a18b0"/><rect x="2682" y="792" width="30" height="30" fill="#6a18b0"/><rect x="-48" y="822" width="30" height="30" fill="#928064"/><rect x="-18" y="822" width="30" height="30" fill="#928064"/><rect x="12" y="822" width="30" height="30" fill="#928065"/><rect x="42" y="822" width="30" height="30" fill="#938066"/><rect x="72" y="822" width="30" height="30" fill="#938068"/><rect x="2532" y="822" width="30" height="30" fill="#6d19ab"/><rect x="2562" y="822" width="30" height="30" fill="#6c19ad"/><rect x="2592" y="822" width="30" height="30" fill="#6b18ae"/><rect x="2622" y="822" width="30" height="30" fill="#6a18b0"/><rect x="2652" y="822" width="30" height="30" fill="#6a18b0"/><rect x="2682" y="822" width="30" height="30" fill="#6a18b0"/><rect x="-48" y="852" width="30" height="30" fill="#7e8070"/><rect x="-18" y="852" width="30" height="30" fill="#7e8070"/><rect x="12" y="852" width="30" height="30" fill="#7f8071"/><rect x="42" y="852" width="30" height="30" fill="#808072"/><rect x="72" y="852" width="30" height="30" fill="#808074"/><rect x="2532" y="852" width="30" height="30" fill="#6c19ab"/><rect x="2562" y="852" width="30" height="30" fill="#6b19ad"/><rect x="2592" y="852" width="30" height="30" fill="#6a18ae"/><rect x="2622" y="852" width="30" height="30" fill="#6918b0"/><rect x="2652" y="852" width="30" height="30" fill="#6918b0"/><rect x="2682" y="852" width="30" height="30" fill="#6918b0"/><rect x="-48" y="882" width="30" height="30" fill="#6a807f"/><rect x="-18" y="882" width="30" height="30" fill="#6a807f"/><rect x="12" y="882" width="30" height="30" fill="#6b807f"/><rect x="42" y="882" width="30" height="30" fill="#6b8080"/><rect x="72" y="882" width="30" height="30" fill="#6c8081"/><rect x="2532" y="882" width="30" height="30" fill="#6b19ac"/><rect x="2562" y="882" width="30" height="30" fill="#6a19ad"/><rect x="2592" y="882" width="30" height="30" fill="#6a18af"/><rect x="2622" y="882" width="30" height="30" fill="#6918b0"/><rect x="2652" y="882" width="30" height="30" fill="#6918b0"/><rect x="2682" y="882" width="30" height="30" fill="#6918b0"/><rect x="-48" y="912" width="30" height="30" fill="#4f8091"/><rect x="-18" y="912" width="30" height="30" fill="#4f8091"/><rect x="12" y="912" width="30" height="30" fill="#508092"/><rect x="42" y="912" width="30" height="30" fill="#518093"/><rect x="72" y="912" width="30" height="30" fill="#528093"/><rect x="2532" y="912" width="30" height="30" fill="#6919ac"/><rect x="2562" y="912" width="30" height="30" fill="#6919ad"/><rect x="2592" y="912" width="30" height="30" fill="#6918af"/><rect x="2622" y="912" width="30" height="30" fill="#6918b0"/><rect x="2652" y="912" width="30" height="30" fill="#6918b0"/><rect x="2682" y="912" width="30" height="30" fill="#6918b0"/><rect x="-48" y="942" width="30" height="30" fill="#3680a3"/><rect x="-18" y="942" width="30" height="30" fill="#3680a3"/><rect x="12" y="942" width="30" height="30" fill="#3780a4"/><rect x="42" y="942" width="30" height="30" fill="#3880a4"/><rect x="72" y="942" width="30" height="30" fill="#3980a5"/><rect x="2532" y="942" width="30" height="30" fill="#6819ad"/><rect x="2562" y="942" width="30" height="30" fill="#6818ae"/><rect x="2592" y="942" width="30" height="30" fill="#6818af"/><rect x="2622" y="942" width="30" height="30" fill="#6818b0"/><rect x="2652" y="942" width="30" height="30" fill="#6818b0"/><rect x="2682" y="942" width="30" height="30" fill="#6818b0"/><rect x="-48" y="972" width="30" height="30" fill="#2280b2"/><rect x="-18" y="972" width="30" height="30" fill="#2280b2"/><rect x="12" y="972" width="30" height="30" fill="#2480b2"/><rect x="42" y="972" width="30" height="30" fill="#2580b2"/><rect x="72" y="972" width="30" height="30" fill="#2680b3"/><rect x="2532" y="972" width="30" height="30" fill="#6719ad"/><rect x="2562" y="972" width="30" height="30" fill="#6718ae"/><rect x="2592" y="972" width="30" height="30" fill="#6818af"/><rect x="2622" y="972" width="30" height="30" fill="#6818b0"/><rect x="2652" y="972" width="30" height="30" fill="#6818b0"/><rect x="2682" y="972" width="30" height="30" fill="#6818b0"/><rect x="-48" y="1002" width="30" height="30" fill="#1580bb"/><rect x="-18" y="1002" width="30" height="30" fill="#1580bb"/><rect x="12" y="1002" width="30" height="30" fill="#1680bb"/><rect x="42" y="1002" width="30" height="30" fill="#1780bb"/><rect x="72" y="1002" width="30" height="30" fill="#1980bb"/><rect x="2532" y="1002" width="30" height="30" fill="#6419ac"/><rect x="2562" y="1002" width="30" height="30" fill="#6518ad"/><rect x="2592" y="1002" width="30" height="30" fill="#6518ae"/><rect x="2622" y="1002" width="30" height="30" fill="#6618af"/><rect x="2652" y="1002" width="30" height="30" fill="#6618af"/><rect x="2682" y="1002" width="30" height="30" fill="#6618af"/><rect x="-48" y="1032" width="30" height="30" fill="#0b80c0"/><rect x="-18" y="1032" width="30" height="30" fill="#0b80c0"/><rect x="12" y="1032" width="30" height="30" fill="#0c80c0"/><rect x="42" y="1032" width="30" height="30" fill="#0e80c0"/><rect x="72" y="1032" width="30" height="30" fill="#0f80c0"/><rect x="2532" y="1032" width="30" height="30" fill="#6018ab"/><rect x="2562" y="1032" width="30" height="30" fill="#6118ac"/><rect x="2592" y="1032" width="30" height="30" fill="#6218ad"/><rect x="2622" y="1032" width="30" height="30" fill="#6218ae"/><rect x="2652" y="1032" width="30" height="30" fill="#6218ae"/><rect x="2682" y="1032" width="30" height="30" fill="#6218ae"/><rect x="-48" y="1062" width="30" height="30" fill="#0a80c0"/><rect x="-18" y="1062" width="30" height="30" fill="#0a80c0"/><rect x="12" y="1062" width="30" height="30" fill="#0b80c0"/><rect x="42" y="1062" width="30" height="30" fill="#0c80c0"/><rect x="72" y="1062" width="30" height="30" fill="#0e80c0"/><rect x="2532" y="1062" width="30" height="30" fill="#5d18aa"/><rect x="2562" y="1062" width="30" height="30" fill="#5d18ab"/><rect x="2592" y="1062" width="30" height="30" fill="#5e18ac"/><rect x="2622" y="1062" width="30" height="30" fill="#5f18ad"/><rect x="2652" y="1062" width="30" height="30" fill="#5f18ad"/><rect x="2682" y="1062" width="30" height="30" fill="#5f18ad"/><rect x="-48" y="1092" width="30" height="30" fill="#0980c0"/><rect x="-18" y="1092" width="30" height="30" fill="#0980c0"/><rect x="12" y="1092" width="30" height="30" fill="#0a80c0"/><rect x="42" y="1092" width="30" height="30" fill="#0c80c0"/><rect x="72" y="1092" width="30" height="30" fill="#0d80c0"/><rect x="2532" y="1092" width="30" height="30" fill="#5918a8"/><rect x="2562" y="1092" width="30" height="30" fill="#5a18aa"/><rect x="2592" y="1092" width="30" height="30" fill="#5a18ab"/><rect x="2622" y="1092" width="30" height="30" fill="#5b18ac"/><rect x="2652" y="1092" width="30" height="30" fill="#5b18ac"/><rect x="2682" y="1092" width="30" height="30" fill="#5b18ac"/><rect x="-48" y="1122" width="30" height="30" fill="#0980c0"/><rect x="-18" y="1122" width="30" height="30" fill="#0980c0"/><rect x="12" y="1122" width="30" height="30" fill="#0a80c0"/><rect x="42" y="1122" width="30" height="30" fill="#0b80c0"/><rect x="72" y="1122" width="30" height="30" fill="#0d80c0"/><rect x="2532" y="1122" width="30" height="30" fill="#5618a7"/><rect x="2562" y="1122" width="30" height="30" fill="#5618a8"/><rect x="2592" y="1122" width="30" height="30" fill="#5718a9"/><rect x="2622" y="1122" width="30" height="30" fill="#5818aa"/><rect x="2652" y="1122" width="30" height="30" fill="#5818ab"/><rect x="2682" y="1122" width="30" height="30" fill="#5818ab"/><rect x="-48" y="1152" width="30" height="30" fill="#0880c0"/><rect x="-18" y="1152" width="30" height="30" fill="#0880c0"/><rect x="12" y="1152" width="30" height="30" fill="#0a80c0"/><rect x="42" y="1152" width="30" height="30" fill="#0b80c0"/><rect x="72" y="1152" width="30" height="30" fill="#0c80c0"/><rect x="2532" y="1152" width="30" height="30" fill="#5218a6"/><rect x="2562" y="1152" width="30" height="30" fill="#5318a7"/><rect x="2592" y="1152" width="30" height="30" fill="#5318a8"/><rect x="2622" y="1152" width="30" height="30" fill="#5418a9"/><rect x="2652" y="1152" width="30" height="30" fill="#5418a9"/><rect x="2682" y="1152" width="30" height="30" fill="#5418a9"/><rect x="-48" y="1182" width="30" height="30" fill="#0880c0"/><rect x="-18" y="1182" width="30" height="30" fill="#0880c0"/><rect x="12" y="1182" width="30" height="30" fill="#0980c0"/><rect x="42" y="1182" width="30" height="30" fill="#0a80c0"/><rect x="72" y="1182" width="30" height="30" fill="#0b80c0"/><rect x="2532" y="1182" width="30" height="30" fill="#4e18a4"/><rect x="2562" y="1182" width="30" height="30" fill="#4f18a6"/><rect x="2592" y="1182" width="30" height="30" fill="#5018a7"/><rect x="2622" y="1182" width="30" height="30" fill="#5018a8"/><rect x="2652" y="1182" width="30" height="30" fill="#5018a8"/><rect x="2682" y="1182" width="30" height="30" fill="#5018a8"/><rect x="-48" y="1212" width="30" height="30" fill="#0881c0"/><rect x="-18" y="1212" width="30" height="30" fill="#0881c0"/><rect x="12" y="1212" width="30" height="30" fill="#0981c0"/><rect x="42" y="1212" width="30" height="30" fill="#0a81c0"/><rect x="72" y="1212" width="30" height="30" fill="#0b81c0"/><rect x="2532" y="1212" width="30" height="30" fill="#4b18a3"/><rect x="2562" y="1212" width="30" height="30" fill="#4b18a4"/><rect x="2592" y="1212" width="30" height="30" fill="#4c18a6"/><rect x="2622" y="1212" width="30" height="30" fill="#4d18a7"/><rect x="2652" y="1212" width="30" height="30" fill="#4d18a7"/><rect x="2682" y="1212" width="30" height="30" fill="#4d18a7"/><rect x="-48" y="1242" width="30" height="30" fill="#0882c0"/><rect x="-18" y="1242" width="30" height="30" fill="#0882c0"/><rect x="12" y="1242" width="30" height="30" fill="#0982c0"/><rect x="42" y="1242" width="30" height="30" fill="#0a82c0"/><rect x="72" y="1242" width="30" height="30" fill="#0b82c0"/><rect x="2532" y="1242" width="30" height="30" fill="#4718a2"/><rect x="2562" y="1242" width="30" height="30" fill="#4818a3"/><rect x="2592" y="1242" width="30" height="30" fill="#4818a4"/><rect x="2622" y="1242" width="30" height="30" fill="#4918a6"/><rect x="2652" y="1242" width="30" height="30" fill="#4918a6"/><rect x="2682" y="1242" width="30" height="30" fill="#4918a6"/><rect x="-48" y="1272" width="30" height="30" fill="#0883c0"/><rect x="-18" y="1272" width="30" height="30" fill="#0883c0"/><rect x="12" y="1272" width="30" height="30" fill="#0983c0"/><rect x="42" y="1272" width="30" height="30" fill="#0a83c0"/><rect x="72" y="1272" width="30" height="30" fill="#0a83bf"/><rect x="2532" y="1272" width="30" height="30" fill="#4418a0"/><rect x="2562" y="1272" width="30" height="30" fill="#4418a2"/><rect x="2592" y="1272" width="30" height="30" fill="#4518a3"/><rect x="2622" y="1272" width="30" height="30" fill="#4618a4"/><rect x="2652" y="1272" width="30" height="30" fill="#4618a5"/><rect x="2682" y="1272" width="30" height="30" fill="#4618a5"/><rect x="-48" y="1302" width="30" height="30" fill="#0885c0"/><rect x="-18" y="1302" width="30" height="30" fill="#0885c0"/><rect x="12" y="1302" width="30" height="30" fill="#0985c0"/><rect x="42" y="1302" width="30" height="30" fill="#0984c0"/><rect x="72" y="1302" width="30" height="30" fill="#0a84bf"/><rect x="2532" y="1302" width="30" height="30" fill="#40189f"/><rect x="2562" y="1302" width="30" height="30" fill="#4118a0"/><rect x="2592" y="1302" width="30" height="30" fill="#4118a2"/><rect x="2622" y="1302" width="30" height="30" fill="#4218a3"/><rect x="2652" y="1302" width="30" height="30" fill="#4218a3"/><rect x="2682" y="1302" width="30" height="30" fill="#4218a3"/><rect x="-48" y="1332" width="30" height="30" fill="#0886c0"/><rect x="-18" y="1332" width="30" height="30" fill="#0886c0"/><rect x="12" y="1332" width="30" height="30" fill="#0986c0"/><rect x="42" y="1332" width="30" height="30" fill="#0985bf"/><rect x="72" y="1332" width="30" height="30" fill="#0a85bf"/><rect x="2532" y="1332" width="30" height="30" fill="#3c189e"/><rect x="2562" y="1332" width="30" height="30" fill="#3d189f"/><rect x="2592" y="1332" width="30" height="30" fill="#3e18a1"/><rect x="2622" y="1332" width="30" height="30" fill="#3e18a2"/><rect x="2652" y="1332" width="30" height="30" fill="#3e18a2"/><rect x="2682" y="1332" width="30" height="30" fill="#3e18a2"/><rect x="-48" y="1362" width="30" height="30" fill="#0887c0"/><rect x="-18" y="1362" width="30" height="30" fill="#0887c0"/><rect x="12" y="1362" width="30" height="30" fill="#0887c0"/><rect x="42" y="1362" width="30" height="30" fill="#0987bf"/><rect x="72" y="1362" width="30" height="30" fill="#0a86bf"/><rect x="2532" y="1362" width="30" height="30" fill="#39189c"/><rect x="2562" y="1362" width="30" height="30" fill="#39189e"/><rect x="2592" y="1362" width="30" height="30" fill="#3a189f"/><rect x="2622" y="1362" width="30" height="30" fill="#3b18a1"/><rect x="2652" y="1362" width="30" height="30" fill="#3b18a1"/><rect x="2682" y="1362" width="30" height="30" fill="#3b18a1"/><rect x="-48" y="1392" width="30" height="30" fill="#0889c0"/><rect x="-18" y="1392" width="30" height="30" fill="#0889c0"/><rect x="12" y="1392" width="30" height="30" fill="#0889c0"/><rect x="42" y="1392" width="30" height="30" fill="#0988c0"/><rect x="72" y="1392" width="30" height="30" fill="#0988bf"/><rect x="2532" y="1392" width="30" height="30" fill="#36179b"/><rect x="2562" y="1392" width="30" height="30" fill="#36189c"/><rect x="2592" y="1392" width="30" height="30" fill="#37189e"/><rect x="2622" y="1392" width="30" height="30" fill="#3818a0"/><rect x="2652" y="1392" width="30" height="30" fill="#3818a0"/><rect x="2682" y="1392" width="30" height="30" fill="#3818a0"/><rect x="-48" y="1422" width="30" height="30" fill="#088cc2"/><rect x="-18" y="1422" width="30" height="30" fill="#088cc2"/><rect x="12" y="1422" width="30" height="30" fill="#088cc2"/><rect x="42" y="1422" width="30" height="30" fill="#098bc1"/><rect x="72" y="1422" width="30" height="30" fill="#098bc1"/><rect x="2532" y="1422" width="30" height="30" fill="#341799"/><rect x="2562" y="1422" width="30" height="30" fill="#35179b"/><rect x="2592" y="1422" width="30" height="30" fill="#35179c"/><rect x="2622" y="1422" width="30" height="30" fill="#36179e"/><rect x="2652" y="1422" width="30" height="30" fill="#36179e"/><rect x="2682" y="1422" width="30" height="30" fill="#36179e"/><rect x="-48" y="1452" width="30" height="30" fill="#088fc4"/><rect x="-18" y="1452" width="30" height="30" fill="#088fc4"/><rect x="12" y="1452" width="30" height="30" fill="#088fc3"/><rect x="42" y="1452" width="30" height="30" fill="#098ec3"/><rect x="72" y="1452" width="30" height="30" fill="#098ec2"/><rect x="2532" y="1452" width="30" height="30" fill="#331697"/><rect x="2562" y="1452" width="30" height="30" fill="#331699"/><rect x="2592" y="1452" width="30" height="30" fill="#34169b"/><rect x="2622" y="1452" width="30" height="30" fill="#35169c"/><rect x="2652" y="1452" width="30" height="30" fill="#35169c"/><rect x="2682" y="1452" width="30" height="30" fill="#35169c"/><rect x="-48" y="1482" width="30" height="30" fill="#0892c5"/><rect x="-18" y="1482" width="30" height="30" fill="#0892c5"/><rect x="12" y="1482" width="30" height="30" fill="#0892c5"/><rect x="42" y="1482" width="30" height="30" fill="#0892c4"/><rect x="72" y="1482" width="30" height="30" fill="#0991c4"/><rect x="2532" y="1482" width="30" height="30" fill="#311596"/><rect x="2562" y="1482" width="30" height="30" fill="#321597"/><rect x="2592" y="1482" width="30" height="30" fill="#331599"/><rect x="2622" y="1482" width="30" height="30" fill="#33159b"/><rect x="2652" y="1482" width="30" height="30" fill="#33159b"/><rect x="2682" y="1482" width="30" height="30" fill="#33159b"/><rect x="-48" y="1512" width="30" height="30" fill="#0896c7"/><rect x="-18" y="1512" width="30" height="30" fill="#0896c7"/><rect x="12" y="1512" width="30" height="30" fill="#0895c6"/><rect x="42" y="1512" width="30" height="30" fill="#0895c6"/><rect x="72" y="1512" width="30" height="30" fill="#0994c5"/><rect x="2532" y="1512" width="30" height="30" fill="#301494"/><rect x="2562" y="1512" width="30" height="30" fill="#301495"/><rect x="2592" y="1512" width="30" height="30" fill="#311497"/><rect x="2622" y="1512" width="30" height="30" fill="#321499"/><rect x="2652" y="1512" width="30" height="30" fill="#321499"/><rect x="2682" y="1512" width="30" height="30" fill="#321499"/><rect x="-48" y="1542" width="30" height="30" fill="#0899c8"/><rect x="-18" y="1542" width="30" height="30" fill="#0899c8"/><rect x="12" y="1542" width="30" height="30" fill="#0898c8"/><rect x="42" y="1542" width="30" height="30" fill="#0898c7"/><rect x="72" y="1542" width="30" height="30" fill="#0897c7"/><rect x="2532" y="1542" width="30" height="30" fill="#2e1392"/><rect x="2562" y="1542" width="30" height="30" fill="#2f1394"/><rect x="2592" y="1542" width="30" height="30" fill="#301495"/><rect x="2622" y="1542" width="30" height="30" fill="#301497"/><rect x="2652" y="1542" width="30" height="30" fill="#301497"/><rect x="2682" y="1542" width="30" height="30" fill="#301497"/><rect x="-48" y="1572" width="30" height="30" fill="#089cca"/><rect x="-18" y="1572" width="30" height="30" fill="#089cca"/><rect x="12" y="1572" width="30" height="30" fill="#089cca"/><rect x="42" y="1572" width="30" height="30" fill="#089bc9"/><rect x="72" y="1572" width="30" height="30" fill="#089bc8"/><rect x="102" y="1572" width="30" height="30" fill="#089ac7"/><rect x="132" y="1572" width="30" height="30" fill="#089ac7"/><rect x="162" y="1572" width="30" height="30" fill="#0899c6"/><rect x="192" y="1572" width="30" height="30" fill="#0899c5"/><rect x="222" y="1572" width="30" height="30" fill="#0898c5"/><rect x="252" y="1572" width="30" height="30" fill="#0997c4"/><rect x="282" y="1572" width="30" height="30" fill="#0997c3"/><rect x="312" y="1572" width="30" height="30" fill="#0996c2"/><rect x="342" y="1572" width="30" height="30" fill="#0996c2"/><rect x="372" y="1572" width="30" height="30" fill="#0995c1"/><rect x="402" y="1572" width="30" height="30" fill="#0995c0"/><rect x="432" y="1572" width="30" height="30" fill="#0994c0"/><rect x="462" y="1572" width="30" height="30" fill="#0993bf"/><rect x="492" y="1572" width="30" height="30" fill="#0a93be"/><rect x="522" y="1572" width="30" height="30" fill="#0a92be"/><rect x="552" y="1572" width="30" height="30" fill="#0a92bd"/><rect x="582" y="1572" width="30" height="30" fill="#0a91bc"/><rect x="612" y="1572" width="30" height="30" fill="#0a91bb"/><rect x="642" y="1572" width="30" height="30" fill="#0a90bb"/><rect x="672" y="1572" width="30" height="30" fill="#0a90ba"/><rect x="702" y="1572" width="30" height="30" fill="#0b8fb9"/><rect x="732" y="1572" width="30" height="30" fill="#0b8fb9"/><rect x="762" y="1572" width="30" height="30" fill="#0b8eb8"/><rect x="792" y="1572" width="30" height="30" fill="#0b8eb7"/><rect x="822" y="1572" width="30" height="30" fill="#0b8db6"/><rect x="852" y="1572" width="30" height="30" fill="#0b8db6"/><rect x="882" y="1572" width="30" height="30" fill="#0b8cb5"/><rect x="912" y="1572" width="30" height="30" fill="#0b8bb4"/><rect x="942" y="1572" width="30" height="30" fill="#0b8bb3"/><rect x="972" y="1572" width="30" height="30" fill="#0b8ab3"/><rect x="1002" y="1572" width="30" height="30" fill="#0b8ab2"/><rect x="1032" y="1572" width="30" height="30" fill="#0b89b1"/><rect x="1062" y="1572" width="30" height="30" fill="#0a88b1"/><rect x="1092" y="1572" width="30" height="30" fill="#0a88b0"/><rect x="1122" y="1572" width="30" height="30" fill="#0a87af"/><rect x="1152" y="1572" width="30" height="30" fill="#0a86ae"/><rect x="1182" y="1572" width="30" height="30" fill="#0a85ae"/><rect x="1212" y="1572" width="30" height="30" fill="#0984ad"/><rect x="1242" y="1572" width="30" height="30" fill="#0984ac"/><rect x="1272" y="1572" width="30" height="30" fill="#0983ab"/><rect x="1302" y="1572" width="30" height="30" fill="#0982aa"/><rect x="1332" y="1572" width="30" height="30" fill="#0880aa"/><rect x="1362" y="1572" width="30" height="30" fill="#087fa9"/><rect x="1392" y="1572" width="30" height="30" fill="#087ea8"/><rect x="1422" y="1572" width="30" height="30" fill="#087da7"/><rect x="1452" y="1572" width="30" height="30" fill="#087ba7"/><rect x="1482" y="1572" width="30" height="30" fill="#087aa6"/><rect x="1512" y="1572" width="30" height="30" fill="#0779a5"/><rect x="1542" y="1572" width="30" height="30" fill="#0777a4"/><rect x="1572" y="1572" width="30" height="30" fill="#0776a3"/><rect x="1602" y="1572" width="30" height="30" fill="#0774a2"/><rect x="1632" y="1572" width="30" height="30" fill="#0773a2"/><rect x="1662" y="1572" width="30" height="30" fill="#076ea0"/><rect x="1692" y="1572" width="30" height="30" fill="#06699d"/><rect x="1722" y="1572" width="30" height="30" fill="#06639b"/><rect x="1752" y="1572" width="30" height="30" fill="#065e99"/><rect x="1782" y="1572" width="30" height="30" fill="#065897"/><rect x="1812" y="1572" width="30" height="30" fill="#065395"/><rect x="1842" y="1572" width="30" height="30" fill="#064d93"/><rect x="1872" y="1572" width="30" height="30" fill="#064890"/><rect x="1902" y="1572" width="30" height="30" fill="#06438e"/><rect x="1932" y="1572" width="30" height="30" fill="#053d8c"/><rect x="1962" y="1572" width="30" height="30" fill="#05388a"/><rect x="1992" y="1572" width="30" height="30" fill="#08348a"/><rect x="2022" y="1572" width="30" height="30" fill="#0b2f89"/><rect x="2052" y="1572" width="30" height="30" fill="#0e2b89"/><rect x="2082" y="1572" width="30" height="30" fill="#122789"/><rect x="2112" y="1572" width="30" height="30" fill="#152389"/><rect x="2142" y="1572" width="30" height="30" fill="#181f89"/><rect x="2172" y="1572" width="30" height="30" fill="#1b1b89"/><rect x="2202" y="1572" width="30" height="30" fill="#1e1989"/><rect x="2232" y="1572" width="30" height="30" fill="#1f1888"/><rect x="2262" y="1572" width="30" height="30" fill="#211788"/><rect x="2292" y="1572" width="30" height="30" fill="#231688"/><rect x="2322" y="1572" width="30" height="30" fill="#251588"/><rect x="2352" y="1572" width="30" height="30" fill="#271388"/><rect x="2382" y="1572" width="30" height="30" fill="#281288"/><rect x="2412" y="1572" width="30" height="30" fill="#291289"/><rect x="2442" y="1572" width="30" height="30" fill="#2a128b"/><rect x="2472" y="1572" width="30" height="30" fill="#2b128d"/><rect x="2502" y="1572" width="30" height="30" fill="#2c138e"/><rect x="2532" y="1572" width="30" height="30" fill="#2c1390"/><rect x="2562" y="1572" width="30" height="30" fill="#2d1392"/><rect x="2592" y="1572" width="30" height="30" fill="#2e1394"/><rect x="2622" y="1572" width="30" height="30" fill="#2f1395"/><rect x="2652" y="1572" width="30" height="30" fill="#2f1396"/><rect x="2682" y="1572" width="30" height="30" fill="#2f1396"/><rect x="-48" y="1602" width="30" height="30" fill="#08a0cc"/><rect x="-18" y="1602" width="30" height="30" fill="#08a0cc"/><rect x="12" y="1602" width="30" height="30" fill="#089fcb"/><rect x="42" y="1602" width="30" height="30" fill="#089fca"/><rect x="72" y="1602" width="30" height="30" fill="#089eca"/><rect x="102" y="1602" width="30" height="30" fill="#089ec9"/><rect x="132" y="1602" width="30" height="30" fill="#089dc8"/><rect x="162" y="1602" width="30" height="30" fill="#089cc7"/><rect x="192" y="1602" width="30" height="30" fill="#089cc7"/><rect x="222" y="1602" width="30" height="30" fill="#089bc6"/><rect x="252" y="1602" width="30" height="30" fill="#089ac5"/><rect x="282" y="1602" width="30" height="30" fill="#089ac4"/><rect x="312" y="1602" width="30" height="30" fill="#0899c4"/><rect x="342" y="1602" width="30" height="30" fill="#0899c3"/><rect x="372" y="1602" width="30" height="30" fill="#0898c2"/><rect x="402" y="1602" width="30" height="30" fill="#0897c1"/><rect x="432" y="1602" width="30" height="30" fill="#0897c1"/><rect x="462" y="1602" width="30" height="30" fill="#0896c0"/><rect x="492" y="1602" width="30" height="30" fill="#0896bf"/><rect x="522" y="1602" width="30" height="30" fill="#0895be"/><rect x="552" y="1602" width="30" height="30" fill="#0894bd"/><rect x="582" y="1602" width="30" height="30" fill="#0894bd"/><rect x="612" y="1602" width="30" height="30" fill="#0893bc"/><rect x="642" y="1602" width="30" height="30" fill="#0992bb"/><rect x="672" y="1602" width="30" height="30" fill="#0992ba"/><rect x="702" y="1602" width="30" height="30" fill="#0991ba"/><rect x="732" y="1602" width="30" height="30" fill="#0991b9"/><rect x="762" y="1602" width="30" height="30" fill="#0990b8"/><rect x="792" y="1602" width="30" height="30" fill="#0990b7"/><rect x="822" y="1602" width="30" height="30" fill="#098fb7"/><rect x="852" y="1602" width="30" height="30" fill="#098eb6"/><rect x="882" y="1602" width="30" height="30" fill="#098eb5"/><rect x="912" y="1602" width="30" height="30" fill="#098db4"/><rect x="942" y="1602" width="30" height="30" fill="#088db3"/><rect x="972" y="1602" width="30" height="30" fill="#088cb3"/><rect x="1002" y="1602" width="30" height="30" fill="#088bb2"/><rect x="1032" y="1602" width="30" height="30" fill="#088bb1"/><rect x="1062" y="1602" width="30" height="30" fill="#088ab0"/><rect x="1092" y="1602" width="30" height="30" fill="#0889af"/><rect x="1122" y="1602" width="30" height="30" fill="#0889af"/><rect x="1152" y="1602" width="30" height="30" fill="#0788ae"/><rect x="1182" y="1602" width="30" height="30" fill="#0787ad"/><rect x="1212" y="1602" width="30" height="30" fill="#0786ac"/><rect x="1242" y="1602" width="30" height="30" fill="#0785ab"/><rect x="1272" y="1602" width="30" height="30" fill="#0785aa"/><rect x="1302" y="1602" width="30" height="30" fill="#0684aa"/><rect x="1332" y="1602" width="30" height="30" fill="#0682a9"/><rect x="1362" y="1602" width="30" height="30" fill="#0681a8"/><rect x="1392" y="1602" width="30" height="30" fill="#0680a7"/><rect x="1422" y="1602" width="30" height="30" fill="#067ea6"/><rect x="1452" y="1602" width="30" height="30" fill="#067da6"/><rect x="1482" y="1602" width="30" height="30" fill="#057ca5"/><rect x="1512" y="1602" width="30" height="30" fill="#057aa4"/><rect x="1542" y="1602" width="30" height="30" fill="#0579a3"/><rect x="1572" y="1602" width="30" height="30" fill="#0577a2"/><rect x="1602" y="1602" width="30" height="30" fill="#0576a1"/><rect x="1632" y="1602" width="30" height="30" fill="#0475a1"/><rect x="1662" y="1602" width="30" height="30" fill="#04709e"/><rect x="1692" y="1602" width="30" height="30" fill="#046a9c"/><rect x="1722" y="1602" width="30" height="30" fill="#04649a"/><rect x="1752" y="1602" width="30" height="30" fill="#045f98"/><rect x="1782" y="1602" width="30" height="30" fill="#045996"/><rect x="1812" y="1602" width="30" height="30" fill="#045493"/><rect x="1842" y="1602" width="30" height="30" fill="#034e91"/><rect x="1872" y="1602" width="30" height="30" fill="#03498f"/><rect x="1902" y="1602" width="30" height="30" fill="#03438d"/><rect x="1932" y="1602" width="30" height="30" fill="#033e8a"/><rect x="1962" y="1602" width="30" height="30" fill="#033888"/><rect x="1992" y="1602" width="30" height="30" fill="#063488"/><rect x="2022" y="1602" width="30" height="30" fill="#093088"/><rect x="2052" y="1602" width="30" height="30" fill="#0c2b88"/><rect x="2082" y="1602" width="30" height="30" fill="#102787"/><rect x="2112" y="1602" width="30" height="30" fill="#132387"/><rect x="2142" y="1602" width="30" height="30" fill="#161f87"/><rect x="2172" y="1602" width="30" height="30" fill="#191b87"/><rect x="2202" y="1602" width="30" height="30" fill="#1c1887"/><rect x="2232" y="1602" width="30" height="30" fill="#1e1787"/><rect x="2262" y="1602" width="30" height="30" fill="#1f1686"/><rect x="2292" y="1602" width="30" height="30" fill="#211586"/><rect x="2322" y="1602" width="30" height="30" fill="#231486"/><rect x="2352" y="1602" width="30" height="30" fill="#251386"/><rect x="2382" y="1602" width="30" height="30" fill="#271286"/><rect x="2412" y="1602" width="30" height="30" fill="#281287"/><rect x="2442" y="1602" width="30" height="30" fill="#291289"/><rect x="2472" y="1602" width="30" height="30" fill="#29128b"/><rect x="2502" y="1602" width="30" height="30" fill="#2a128d"/><rect x="2532" y="1602" width="30" height="30" fill="#2b128e"/><rect x="2562" y="1602" width="30" height="30" fill="#2c1290"/><rect x="2592" y="1602" width="30" height="30" fill="#2d1292"/><rect x="2622" y="1602" width="30" height="30" fill="#2d1294"/><rect x="2652" y="1602" width="30" height="30" fill="#2d1294"/><rect x="2682" y="1602" width="30" height="30" fill="#2d1294"/><rect x="-48" y="1632" width="30" height="30" fill="#08a3ce"/><rect x="-18" y="1632" width="30" height="30" fill="#08a3ce"/><rect x="12" y="1632" width="30" height="30" fill="#08a3cd"/><rect x="42" y="1632" width="30" height="30" fill="#08a2cc"/><rect x="72" y="1632" width="30" height="30" fill="#08a2cb"/><rect x="102" y="1632" width="30" height="30" fill="#08a1ca"/><rect x="132" y="1632" width="30" height="30" fill="#08a0ca"/><rect x="162" y="1632" width="30" height="30" fill="#08a0c9"/><rect x="192" y="1632" width="30" height="30" fill="#089fc8"/><rect x="222" y="1632" width="30" height="30" fill="#079ec7"/><rect x="252" y="1632" width="30" height="30" fill="#079ec6"/><rect x="282" y="1632" width="30" height="30" fill="#079dc5"/><rect x="312" y="1632" width="30" height="30" fill="#079cc5"/><rect x="342" y="1632" width="30" height="30" fill="#079cc4"/><rect x="372" y="1632" width="30" height="30" fill="#079bc3"/><rect x="402" y="1632" width="30" height="30" fill="#079ac2"/><rect x="432" y="1632" width="30" height="30" fill="#079ac1"/><rect x="462" y="1632" width="30" height="30" fill="#0799c1"/><rect x="492" y="1632" width="30" height="30" fill="#0798c0"/><rect x="522" y="1632" width="30" height="30" fill="#0798bf"/><rect x="552" y="1632" width="30" height="30" fill="#0797be"/><rect x="582" y="1632" width="30" height="30" fill="#0796bd"/><rect x="612" y="1632" width="30" height="30" fill="#0796bc"/><rect x="642" y="1632" width="30" height="30" fill="#0795bc"/><rect x="672" y="1632" width="30" height="30" fill="#0794bb"/><rect x="702" y="1632" width="30" height="30" fill="#0794ba"/><rect x="732" y="1632" width="30" height="30" fill="#0793b9"/><rect x="762" y="1632" width="30" height="30" fill="#0792b8"/><rect x="792" y="1632" width="30" height="30" fill="#0792b7"/><rect x="822" y="1632" width="30" height="30" fill="#0691b7"/><rect x="852" y="1632" width="30" height="30" fill="#0690b6"/><rect x="882" y="1632" width="30" height="30" fill="#0690b5"/><rect x="912" y="1632" width="30" height="30" fill="#068fb4"/><rect x="942" y="1632" width="30" height="30" fill="#068eb3"/><rect x="972" y="1632" width="30" height="30" fill="#068eb2"/><rect x="1002" y="1632" width="30" height="30" fill="#068db2"/><rect x="1032" y="1632" width="30" height="30" fill="#068cb1"/><rect x="1062" y="1632" width="30" height="30" fill="#058cb0"/><rect x="1092" y="1632" width="30" height="30" fill="#058baf"/><rect x="1122" y="1632" width="30" height="30" fill="#058aae"/><rect x="1152" y="1632" width="30" height="30" fill="#058aad"/><rect x="1182" y="1632" width="30" height="30" fill="#0589ac"/><rect x="1212" y="1632" width="30" height="30" fill="#0588ac"/><rect x="1242" y="1632" width="30" height="30" fill="#0487ab"/><rect x="1272" y="1632" width="30" height="30" fill="#0486aa"/><rect x="1302" y="1632" width="30" height="30" fill="#0486a9"/><rect x="1332" y="1632" width="30" height="30" fill="#0484a8"/><rect x="1362" y="1632" width="30" height="30" fill="#0483a7"/><rect x="1392" y="1632" width="30" height="30" fill="#0481a6"/><rect x="1422" y="1632" width="30" height="30" fill="#0380a6"/><rect x="1452" y="1632" width="30" height="30" fill="#037fa5"/><rect x="1482" y="1632" width="30" height="30" fill="#037da4"/><rect x="1512" y="1632" width="30" height="30" fill="#037ca3"/><rect x="1542" y="1632" width="30" height="30" fill="#037aa2"/><rect x="1572" y="1632" width="30" height="30" fill="#0379a1"/><rect x="1602" y="1632" width="30" height="30" fill="#0278a0"/><rect x="1632" y="1632" width="30" height="30" fill="#02769f"/><rect x="1662" y="1632" width="30" height="30" fill="#02719d"/><rect x="1692" y="1632" width="30" height="30" fill="#026b9b"/><rect x="1722" y="1632" width="30" height="30" fill="#026699"/><rect x="1752" y="1632" width="30" height="30" fill="#026096"/><rect x="1782" y="1632" width="30" height="30" fill="#015a94"/><rect x="1812" y="1632" width="30" height="30" fill="#015592"/><rect x="1842" y="1632" width="30" height="30" fill="#014f90"/><rect x="1872" y="1632" width="30" height="30" fill="#01498d"/><rect x="1902" y="1632" width="30" height="30" fill="#01448b"/><rect x="1932" y="1632" width="30" height="30" fill="#013e89"/><rect x="1962" y="1632" width="30" height="30" fill="#013886"/><rect x="1992" y="1632" width="30" height="30" fill="#043486"/><rect x="2022" y="1632" width="30" height="30" fill="#073086"/><rect x="2052" y="1632" width="30" height="30" fill="#0a2b86"/><rect x="2082" y="1632" width="30" height="30" fill="#0d2786"/><rect x="2112" y="1632" width="30" height="30" fill="#112385"/><rect x="2142" y="1632" width="30" height="30" fill="#141f85"/><rect x="2172" y="1632" width="30" height="30" fill="#171a85"/><rect x="2202" y="1632" width="30" height="30" fill="#1a1885"/><rect x="2232" y="1632" width="30" height="30" fill="#1c1785"/><rect x="2262" y="1632" width="30" height="30" fill="#1e1685"/><rect x="2292" y="1632" width="30" height="30" fill="#201484"/><rect x="2322" y="1632" width="30" height="30" fill="#211384"/><rect x="2352" y="1632" width="30" height="30" fill="#231284"/><rect x="2382" y="1632" width="30" height="30" fill="#251184"/><rect x="2412" y="1632" width="30" height="30" fill="#261186"/><rect x="2442" y="1632" width="30" height="30" fill="#271187"/><rect x="2472" y="1632" width="30" height="30" fill="#281189"/><rect x="2502" y="1632" width="30" height="30" fill="#29118b"/><rect x="2532" y="1632" width="30" height="30" fill="#29118d"/><rect x="2562" y="1632" width="30" height="30" fill="#2a118f"/><rect x="2592" y="1632" width="30" height="30" fill="#2b1190"/><rect x="2622" y="1632" width="30" height="30" fill="#2c1192"/><rect x="2652" y="1632" width="30" height="30" fill="#2c1192"/><rect x="2682" y="1632" width="30" height="30" fill="#2c1192"/><rect x="-48" y="1662" width="30" height="30" fill="#08a7cf"/><rect x="-18" y="1662" width="30" height="30" fill="#08a7cf"/><rect x="12" y="1662" width="30" height="30" fill="#08a6cf"/><rect x="42" y="1662" width="30" height="30" fill="#08a6ce"/><rect x="72" y="1662" width="30" height="30" fill="#08a5cd"/><rect x="102" y="1662" width="30" height="30" fill="#07a4cc"/><rect x="132" y="1662" width="30" height="30" fill="#07a3cb"/><rect x="162" y="1662" width="30" height="30" fill="#07a3ca"/><rect x="192" y="1662" width="30" height="30" fill="#07a2c9"/><rect x="222" y="1662" width="30" height="30" fill="#07a1c8"/><rect x="252" y="1662" width="30" height="30" fill="#07a1c8"/><rect x="282" y="1662" width="30" height="30" fill="#07a0c7"/><rect x="312" y="1662" width="30" height="30" fill="#069fc6"/><rect x="342" y="1662" width="30" height="30" fill="#069ec5"/><rect x="372" y="1662" width="30" height="30" fill="#069ec4"/><rect x="402" y="1662" width="30" height="30" fill="#069dc3"/><rect x="432" y="1662" width="30" height="30" fill="#069cc2"/><rect x="462" y="1662" width="30" height="30" fill="#069cc1"/><rect x="492" y="1662" width="30" height="30" fill="#069bc0"/><rect x="522" y="1662" width="30" height="30" fill="#069ac0"/><rect x="552" y="1662" width="30" height="30" fill="#0599bf"/><rect x="582" y="1662" width="30" height="30" fill="#0599be"/><rect x="612" y="1662" width="30" height="30" fill="#0598bd"/><rect x="642" y="1662" width="30" height="30" fill="#0597bc"/><rect x="672" y="1662" width="30" height="30" fill="#0597bb"/><rect x="702" y="1662" width="30" height="30" fill="#0596ba"/><rect x="732" y="1662" width="30" height="30" fill="#0595b9"/><rect x="762" y="1662" width="30" height="30" fill="#0495b8"/><rect x="792" y="1662" width="30" height="30" fill="#0494b8"/><rect x="822" y="1662" width="30" height="30" fill="#0493b7"/><rect x="852" y="1662" width="30" height="30" fill="#0492b6"/><rect x="882" y="1662" width="30" height="30" fill="#0492b5"/><rect x="912" y="1662" width="30" height="30" fill="#0491b4"/><rect x="942" y="1662" width="30" height="30" fill="#0490b3"/><rect x="972" y="1662" width="30" height="30" fill="#0390b2"/><rect x="1002" y="1662" width="30" height="30" fill="#038fb1"/><rect x="1032" y="1662" width="30" height="30" fill="#038eb0"/><rect x="1062" y="1662" width="30" height="30" fill="#038daf"/><rect x="1092" y="1662" width="30" height="30" fill="#038daf"/><rect x="1122" y="1662" width="30" height="30" fill="#038cae"/><rect x="1152" y="1662" width="30" height="30" fill="#038bad"/><rect x="1182" y="1662" width="30" height="30" fill="#028aac"/><rect x="1212" y="1662" width="30" height="30" fill="#028aab"/><rect x="1242" y="1662" width="30" height="30" fill="#0289aa"/><rect x="1272" y="1662" width="30" height="30" fill="#0288a9"/><rect x="1302" y="1662" width="30" height="30" fill="#0288a8"/><rect x="1332" y="1662" width="30" height="30" fill="#0286a7"/><rect x="1362" y="1662" width="30" height="30" fill="#0185a6"/><rect x="1392" y="1662" width="30" height="30" fill="#0183a6"/><rect x="1422" y="1662" width="30" height="30" fill="#0182a5"/><rect x="1452" y="1662" width="30" height="30" fill="#0180a4"/><rect x="1482" y="1662" width="30" height="30" fill="#017fa3"/><rect x="1512" y="1662" width="30" height="30" fill="#017da2"/><rect x="1542" y="1662" width="30" height="30" fill="#007ca1"/><rect x="1572" y="1662" width="30" height="30" fill="#007ba0"/><rect x="1602" y="1662" width="30" height="30" fill="#00799f"/><rect x="1632" y="1662" width="30" height="30" fill="#00789e"/><rect x="1662" y="1662" width="30" height="30" fill="#00729c"/><rect x="1692" y="1662" width="30" height="30" fill="#006d9a"/><rect x="1722" y="1662" width="30" height="30" fill="#006798"/><rect x="1752" y="1662" width="30" height="30" fill="#006195"/><rect x="1782" y="1662" width="30" height="30" fill="#005b93"/><rect x="1812" y="1662" width="30" height="30" fill="#005590"/><rect x="1842" y="1662" width="30" height="30" fill="#00508e"/><rect x="1872" y="1662" width="30" height="30" fill="#004a8c"/><rect x="1902" y="1662" width="30" height="30" fill="#004489"/><rect x="1932" y="1662" width="30" height="30" fill="#003e87"/><rect x="1962" y="1662" width="30" height="30" fill="#003985"/><rect x="1992" y="1662" width="30" height="30" fill="#013484"/><rect x="2022" y="1662" width="30" height="30" fill="#053084"/><rect x="2052" y="1662" width="30" height="30" fill="#082b84"/><rect x="2082" y="1662" width="30" height="30" fill="#0b2784"/><rect x="2112" y="1662" width="30" height="30" fill="#0f2384"/><rect x="2142" y="1662" width="30" height="30" fill="#121e83"/><rect x="2172" y="1662" width="30" height="30" fill="#151a83"/><rect x="2202" y="1662" width="30" height="30" fill="#181783"/><rect x="2232" y="1662" width="30" height="30" fill="#1a1683"/><rect x="2262" y="1662" width="30" height="30" fill="#1c1583"/><rect x="2292" y="1662" width="30" height="30" fill="#1e1483"/><rect x="2322" y="1662" width="30" height="30" fill="#201382"/><rect x="2352" y="1662" width="30" height="30" fill="#221282"/><rect x="2382" y="1662" width="30" height="30" fill="#241082"/><rect x="2412" y="1662" width="30" height="30" fill="#251084"/><rect x="2442" y="1662" width="30" height="30" fill="#251085"/><rect x="2472" y="1662" width="30" height="30" fill="#261087"/><rect x="2502" y="1662" width="30" height="30" fill="#271089"/><rect x="2532" y="1662" width="30" height="30" fill="#28108b"/><rect x="2562" y="1662" width="30" height="30" fill="#29108d"/><rect x="2592" y="1662" width="30" height="30" fill="#2a108f"/><rect x="2622" y="1662" width="30" height="30" fill="#2a1090"/><rect x="2652" y="1662" width="30" height="30" fill="#2a1091"/><rect x="2682" y="1662" width="30" height="30" fill="#2a1091"/><rect x="-48" y="1692" width="30" height="30" fill="#08a8d0"/><rect x="-18" y="1692" width="30" height="30" fill="#08a8d0"/><rect x="12" y="1692" width="30" height="30" fill="#08a7cf"/><rect x="42" y="1692" width="30" height="30" fill="#08a7ce"/><rect x="72" y="1692" width="30" height="30" fill="#08a6cd"/><rect x="102" y="1692" width="30" height="30" fill="#07a5cc"/><rect x="132" y="1692" width="30" height="30" fill="#07a4cc"/><rect x="162" y="1692" width="30" height="30" fill="#07a4cb"/><rect x="192" y="1692" width="30" height="30" fill="#07a3ca"/><rect x="222" y="1692" width="30" height="30" fill="#07a2c9"/><rect x="252" y="1692" width="30" height="30" fill="#07a2c8"/><rect x="282" y="1692" width="30" height="30" fill="#06a1c7"/><rect x="312" y="1692" width="30" height="30" fill="#06a0c6"/><rect x="342" y="1692" width="30" height="30" fill="#069fc5"/><rect x="372" y="1692" width="30" height="30" fill="#069fc4"/><rect x="402" y="1692" width="30" height="30" fill="#069ec3"/><rect x="432" y="1692" width="30" height="30" fill="#069dc2"/><rect x="462" y="1692" width="30" height="30" fill="#059cc2"/><rect x="492" y="1692" width="30" height="30" fill="#059cc1"/><rect x="522" y="1692" width="30" height="30" fill="#059bc0"/><rect x="552" y="1692" width="30" height="30" fill="#059abf"/><rect x="582" y="1692" width="30" height="30" fill="#059abe"/><rect x="612" y="1692" width="30" height="30" fill="#0599bd"/><rect x="642" y="1692" width="30" height="30" fill="#0598bc"/><rect x="672" y="1692" width="30" height="30" fill="#0497bb"/><rect x="702" y="1692" width="30" height="30" fill="#0497ba"/><rect x="732" y="1692" width="30" height="30" fill="#0496b9"/><rect x="762" y="1692" width="30" height="30" fill="#0495b8"/><rect x="792" y="1692" width="30" height="30" fill="#0494b8"/><rect x="822" y="1692" width="30" height="30" fill="#0494b7"/><rect x="852" y="1692" width="30" height="30" fill="#0393b6"/><rect x="882" y="1692" width="30" height="30" fill="#0392b5"/><rect x="912" y="1692" width="30" height="30" fill="#0392b4"/><rect x="942" y="1692" width="30" height="30" fill="#0391b3"/><rect x="972" y="1692" width="30" height="30" fill="#0390b2"/><rect x="1002" y="1692" width="30" height="30" fill="#038fb1"/><rect x="1032" y="1692" width="30" height="30" fill="#028fb0"/><rect x="1062" y="1692" width="30" height="30" fill="#028eaf"/><rect x="1092" y="1692" width="30" height="30" fill="#028dae"/><rect x="1122" y="1692" width="30" height="30" fill="#028cae"/><rect x="1152" y="1692" width="30" height="30" fill="#028cad"/><rect x="1182" y="1692" width="30" height="30" fill="#028bac"/><rect x="1212" y="1692" width="30" height="30" fill="#018aab"/><rect x="1242" y="1692" width="30" height="30" fill="#018aaa"/><rect x="1272" y="1692" width="30" height="30" fill="#0189a9"/><rect x="1302" y="1692" width="30" height="30" fill="#0188a8"/><rect x="1332" y="1692" width="30" height="30" fill="#0187a7"/><rect x="1362" y="1692" width="30" height="30" fill="#0185a6"/><rect x="1392" y="1692" width="30" height="30" fill="#0184a5"/><rect x="1422" y="1692" width="30" height="30" fill="#0082a4"/><rect x="1452" y="1692" width="30" height="30" fill="#0081a4"/><rect x="1482" y="1692" width="30" height="30" fill="#007fa3"/><rect x="1512" y="1692" width="30" height="30" fill="#007ea2"/><rect x="1542" y="1692" width="30" height="30" fill="#007da1"/><rect x="1572" y="1692" width="30" height="30" fill="#007ba0"/><rect x="1602" y="1692" width="30" height="30" fill="#007a9f"/><rect x="1632" y="1692" width="30" height="30" fill="#00789e"/><rect x="1662" y="1692" width="30" height="30" fill="#00739c"/><rect x="1692" y="1692" width="30" height="30" fill="#006d9a"/><rect x="1722" y="1692" width="30" height="30" fill="#006797"/><rect x="1752" y="1692" width="30" height="30" fill="#006195"/><rect x="1782" y="1692" width="30" height="30" fill="#005b92"/><rect x="1812" y="1692" width="30" height="30" fill="#005690"/><rect x="1842" y="1692" width="30" height="30" fill="#00508e"/><rect x="1872" y="1692" width="30" height="30" fill="#004a8b"/><rect x="1902" y="1692" width="30" height="30" fill="#004489"/><rect x="1932" y="1692" width="30" height="30" fill="#003e87"/><rect x="1962" y="1692" width="30" height="30" fill="#003984"/><rect x="1992" y="1692" width="30" height="30" fill="#013484"/><rect x="2022" y="1692" width="30" height="30" fill="#043084"/><rect x="2052" y="1692" width="30" height="30" fill="#072b83"/><rect x="2082" y="1692" width="30" height="30" fill="#0b2783"/><rect x="2112" y="1692" width="30" height="30" fill="#0e2383"/><rect x="2142" y="1692" width="30" height="30" fill="#111e83"/><rect x="2172" y="1692" width="30" height="30" fill="#151a83"/><rect x="2202" y="1692" width="30" height="30" fill="#171783"/><rect x="2232" y="1692" width="30" height="30" fill="#191682"/><rect x="2262" y="1692" width="30" height="30" fill="#1b1582"/><rect x="2292" y="1692" width="30" height="30" fill="#1d1482"/><rect x="2322" y="1692" width="30" height="30" fill="#1f1382"/><rect x="2352" y="1692" width="30" height="30" fill="#211182"/><rect x="2382" y="1692" width="30" height="30" fill="#231081"/><rect x="2412" y="1692" width="30" height="30" fill="#241083"/><rect x="2442" y="1692" width="30" height="30" fill="#251085"/><rect x="2472" y="1692" width="30" height="30" fill="#261087"/><rect x="2502" y="1692" width="30" height="30" fill="#271089"/><rect x="2532" y="1692" width="30" height="30" fill="#27108a"/><rect x="2562" y="1692" width="30" height="30" fill="#28108c"/><rect x="2592" y="1692" width="30" height="30" fill="#29108e"/><rect x="2622" y="1692" width="30" height="30" fill="#2a1090"/><rect x="2652" y="1692" width="30" height="30" fill="#2a1090"/><rect x="2682" y="1692" width="30" height="30" fill="#2a1090"/><rect x="-48" y="1722" width="30" height="30" fill="#08a8d0"/><rect x="-18" y="1722" width="30" height="30" fill="#08a8d0"/><rect x="12" y="1722" width="30" height="30" fill="#08a7cf"/><rect x="42" y="1722" width="30" height="30" fill="#08a7ce"/><rect x="72" y="1722" width="30" height="30" fill="#08a6cd"/><rect x="102" y="1722" width="30" height="30" fill="#07a5cc"/><rect x="132" y="1722" width="30" height="30" fill="#07a4cc"/><rect x="162" y="1722" width="30" height="30" fill="#07a4cb"/><rect x="192" y="1722" width="30" height="30" fill="#07a3ca"/><rect x="222" y="1722" width="30" height="30" fill="#07a2c9"/><rect x="252" y="1722" width="30" height="30" fill="#07a2c8"/><rect x="282" y="1722" width="30" height="30" fill="#06a1c7"/><rect x="312" y="1722" width="30" height="30" fill="#06a0c6"/><rect x="342" y="1722" width="30" height="30" fill="#069fc5"/><rect x="372" y="1722" width="30" height="30" fill="#069fc4"/><rect x="402" y="1722" width="30" height="30" fill="#069ec3"/><rect x="432" y="1722" width="30" height="30" fill="#069dc2"/><rect x="462" y="1722" width="30" height="30" fill="#059cc2"/><rect x="492" y="1722" width="30" height="30" fill="#059cc1"/><rect x="522" y="1722" width="30" height="30" fill="#059bc0"/><rect x="552" y="1722" width="30" height="30" fill="#059abf"/><rect x="582" y="1722" width="30" height="30" fill="#059abe"/><rect x="612" y="1722" width="30" height="30" fill="#0599bd"/><rect x="642" y="1722" width="30" height="30" fill="#0598bc"/><rect x="672" y="1722" width="30" height="30" fill="#0497bb"/><rect x="702" y="1722" width="30" height="30" fill="#0497ba"/><rect x="732" y="1722" width="30" height="30" fill="#0496b9"/><rect x="762" y="1722" width="30" height="30" fill="#0495b8"/><rect x="792" y="1722" width="30" height="30" fill="#0494b8"/><rect x="822" y="1722" width="30" height="30" fill="#0494b7"/><rect x="852" y="1722" width="30" height="30" fill="#0393b6"/><rect x="882" y="1722" width="30" height="30" fill="#0392b5"/><rect x="912" y="1722" width="30" height="30" fill="#0392b4"/><rect x="942" y="1722" width="30" height="30" fill="#0391b3"/><rect x="972" y="1722" width="30" height="30" fill="#0390b2"/><rect x="1002" y="1722" width="30" height="30" fill="#038fb1"/><rect x="1032" y="1722" width="30" height="30" fill="#028fb0"/><rect x="1062" y="1722" width="30" height="30" fill="#028eaf"/><rect x="1092" y="1722" width="30" height="30" fill="#028dae"/><rect x="1122" y="1722" width="30" height="30" fill="#028cae"/><rect x="1152" y="1722" width="30" height="30" fill="#028cad"/><rect x="1182" y="1722" width="30" height="30" fill="#028bac"/><rect x="1212" y="1722" width="30" height="30" fill="#018aab"/><rect x="1242" y="1722" width="30" height="30" fill="#018aaa"/><rect x="1272" y="1722" width="30" height="30" fill="#0189a9"/><rect x="1302" y="1722" width="30" height="30" fill="#0188a8"/><rect x="1332" y="1722" width="30" height="30" fill="#0187a7"/><rect x="1362" y="1722" width="30" height="30" fill="#0185a6"/><rect x="1392" y="1722" width="30" height="30" fill="#0184a5"/><rect x="1422" y="1722" width="30" height="30" fill="#0082a4"/><rect x="1452" y="1722" width="30" height="30" fill="#0081a4"/><rect x="1482" y="1722" width="30" height="30" fill="#007fa3"/><rect x="1512" y="1722" width="30" height="30" fill="#007ea2"/><rect x="1542" y="1722" width="30" height="30" fill="#007da1"/><rect x="1572" y="1722" width="30" height="30" fill="#007ba0"/><rect x="1602" y="1722" width="30" height="30" fill="#007a9f"/><rect x="1632" y="1722" width="30" height="30" fill="#00789e"/><rect x="1662" y="1722" width="30" height="30" fill="#00739c"/><rect x="1692" y="1722" width="30" height="30" fill="#006d9a"/><rect x="1722" y="1722" width="30" height="30" fill="#006797"/><rect x="1752" y="1722" width="30" height="30" fill="#006195"/><rect x="1782" y="1722" width="30" height="30" fill="#005b92"/><rect x="1812" y="1722" width="30" height="30" fill="#005690"/><rect x="1842" y="1722" width="30" height="30" fill="#00508e"/><rect x="1872" y="1722" width="30" height="30" fill="#004a8b"/><rect x="1902" y="1722" width="30" height="30" fill="#004489"/><rect x="1932" y="1722" width="30" height="30" fill="#003e87"/><rect x="1962" y="1722" width="30" height="30" fill="#003984"/><rect x="1992" y="1722" width="30" height="30" fill="#013484"/><rect x="2022" y="1722" width="30" height="30" fill="#043084"/><rect x="2052" y="1722" width="30" height="30" fill="#072b83"/><rect x="2082" y="1722" width="30" height="30" fill="#0b2783"/><rect x="2112" y="1722" width="30" height="30" fill="#0e2383"/><rect x="2142" y="1722" width="30" height="30" fill="#111e83"/><rect x="2172" y="1722" width="30" height="30" fill="#151a83"/><rect x="2202" y="1722" width="30" height="30" fill="#171783"/><rect x="2232" y="1722" width="30" height="30" fill="#191682"/><rect x="2262" y="1722" width="30" height="30" fill="#1b1582"/><rect x="2292" y="1722" width="30" height="30" fill="#1d1482"/><rect x="2322" y="1722" width="30" height="30" fill="#1f1382"/><rect x="2352" y="1722" width="30" height="30" fill="#211182"/><rect x="2382" y="1722" width="30" height="30" fill="#231081"/><rect x="2412" y="1722" width="30" height="30" fill="#241083"/><rect x="2442" y="1722" width="30" height="30" fill="#251085"/><rect x="2472" y="1722" width="30" height="30" fill="#261087"/><rect x="2502" y="1722" width="30" height="30" fill="#271089"/><rect x="2532" y="1722" width="30" height="30" fill="#27108a"/><rect x="2562" y="1722" width="30" height="30" fill="#28108c"/><rect x="2592" y="1722" width="30" height="30" fill="#29108e"/><rect x="2622" y="1722" width="30" height="30" fill="#2a1090"/><rect x="2652" y="1722" width="30" height="30" fill="#2a1090"/><rect x="2682" y="1722" width="30" height="30" fill="#2a1090"/></svg>
<div style="position:absolute;left:40px;top:40px;width:2558px;height:1606px;border-radius:22px 22px 24px 24px;overflow:hidden;background:#181818;box-shadow:0 16px 40px -4px rgba(0,0,0,0.38);">
<div style="position:absolute;left:-40px;top:-40px;width:2638px;height:1686px;will-change:transform;">
<div style="position:absolute;left:40px;top:40px;width:2558px;height:68px;background:#181818;"></div>
<div style="position:absolute;left:40px;top:108px;width:2558px;height:2px;background:#2b2b2b;"></div>
<div style="position:absolute;left:62px;top:64px;width:24px;height:24px;border-radius:50%;background:#ff5f57;"></div>
<div style="position:absolute;left:102px;top:64px;width:24px;height:24px;border-radius:50%;background:#febc2e;"></div>
<div style="position:absolute;left:142px;top:64px;width:24px;height:24px;border-radius:50%;background:#28c840;"></div>
<svg style="position:absolute;left:780px;top:62px;" width="30" height="26" viewBox="0 0 30 26"><path d="M3 13 H27 M13 3 L3 13 L13 23" fill="none" stroke="#cccccc" stroke-width="2.2"/></svg>
<svg style="position:absolute;left:832px;top:62px;" width="30" height="26" viewBox="0 0 30 26"><path d="M3 13 H27 M17 3 L27 13 L17 23" fill="none" stroke="#8a8a8a" stroke-width="2.2"/></svg>
<div style="position:absolute;left:889px;top:50px;width:975px;height:48px;background:#242424;border:2px solid #3a3a3a;border-radius:10px;"></div>
<svg style="position:absolute;left:1032px;top:58px;" width="32" height="32" viewBox="0 0 32 32"><circle cx="19" cy="12" r="8.8" fill="none" stroke="#cccccc" stroke-width="2.4"/><path d="M12.8 18.2 L3 28.5" stroke="#cccccc" stroke-width="2.6"/></svg>
<div style="position:absolute;left:1071.5px;top:58.56px;height:31px;line-height:31px;font-family:'Liberation Sans', sans-serif;font-size:25.78px;font-weight:400;color:#cccccc;white-space:pre;-webkit-text-stroke:0.3px #cccccc;">[Extension Development Host] sweetpad-demo-xcodegen</div>
<svg style="position:absolute;left:2384px;top:58px;" width="32" height="32" viewBox="0 0 32 32"><rect x="3" y="3" width="26" height="26" rx="4" fill="none" stroke="#cccccc" stroke-width="2.2"/><path d="M3 7 a4 4 0 0 1 4 -4 H13 V29 H7 a4 4 0 0 1 -4 -4z" fill="#cccccc"/></svg>
<svg style="position:absolute;left:2436px;top:58px;" width="32" height="32" viewBox="0 0 32 32"><rect x="3" y="3" width="26" height="26" rx="4" fill="none" stroke="#cccccc" stroke-width="2.2"/><path d="M3 21 H29" stroke="#cccccc" stroke-width="2.2"/></svg>
<svg style="position:absolute;left:2488px;top:58px;" width="32" height="32" viewBox="0 0 32 32"><rect x="3" y="3" width="26" height="26" rx="4" fill="none" stroke="#cccccc" stroke-width="2.2"/><path d="M19 3 V29" stroke="#cccccc" stroke-width="2.2"/></svg>
<svg style="position:absolute;left:2540px;top:58px;" width="34" height="32" viewBox="0 0 34 32"><rect x="5" y="5" width="10" height="23" rx="3" fill="none" stroke="#cccccc" stroke-width="2.2"/><rect x="21" y="5" width="9" height="9" rx="2.5" fill="none" stroke="#cccccc" stroke-width="2.2"/><rect x="21" y="19" width="9" height="9" rx="2.5" fill="none" stroke="#cccccc" stroke-width="2.2"/></svg>
<div style="position:absolute;left:134px;top:110px;width:2px;height:1492px;background:#2b2b2b;"></div>
<div style="position:absolute;left:40px;top:302px;width:4px;height:96px;background:#0078d4;"></div>
<svg style="position:absolute;left:0px;top:0px;" width="2638" height="1686" viewBox="0 0 2638 1686"><path d="M81.3 135.3 H96.5 L106.7 145.5 V166.6 Q106.7 168.8 104.5 168.8 H81.5 Q79.3 168.8 79.3 166.6 V137.5 Q79.3 135.3 81.3 135.3 Z" fill="none" stroke="#868686" stroke-width="2.6" stroke-linejoin="round"/><path d="M96.5 135.3 V145.5 H106.7 Z" fill="#868686" stroke="#868686" stroke-width="1.5" stroke-linejoin="round"/><path d="M79.3 146.8 H69 Q66.8 146.8 66.8 149 V179.4 Q66.8 181.6 69 181.6 H92.4 Q94.6 181.6 94.6 179.4 V168.8" fill="none" stroke="#868686" stroke-width="2.6" stroke-linejoin="round"/><circle cx="94.4" cy="246.5" r="15" fill="none" stroke="#868686" stroke-width="2.6"/><path d="M84 258.5 L67.5 276" stroke="#868686" stroke-width="2.9" stroke-linecap="round"/><path d="M80.8 348 V328 L110 346.2 L91.2 358.2" fill="none" stroke="#d7d7d7" stroke-width="2.6" stroke-linejoin="miter"/><path d="M69.6 360 Q69.6 351.8 76.5 351.8 Q83.4 351.8 83.4 360 V364.5 Q83.4 372 76.5 372 Q69.6 372 69.6 364.5 Z M69.6 359.5 H83.4" fill="none" stroke="#d7d7d7" stroke-width="2.8"/><path d="M64 363.3 H69 M84 363.3 H89 M65.5 354.5 L70 358.5 M87.5 354.5 L83 358.5 M65.5 372.2 L69.8 368 M87.5 372.2 L83.2 368" fill="none" stroke="#d7d7d7" stroke-width="2.8"/><circle cx="77.5" cy="429" r="6.2" fill="none" stroke="#868686" stroke-width="2.6"/><circle cx="77.5" cy="462" r="6.2" fill="none" stroke="#868686" stroke-width="2.6"/><circle cx="98.5" cy="438.2" r="6.2" fill="none" stroke="#868686" stroke-width="2.6"/><path d="M77.5 435.2 V455.8 M98.5 444.4 Q98.5 450.5 92 450.5 H85 Q77.5 450.5 77.5 457" fill="none" stroke="#868686" stroke-width="2.6"/><circle cx="104" cy="462" r="16" fill="#0078d4"/><path d="M106.8 542 V525 Q106.8 523.6 105.4 523.6 H68 Q66.6 523.6 66.6 525 V554 Q66.6 555.4 68 555.4 H86" fill="none" stroke="#868686" stroke-width="2.6"/><path d="M75 561.3 H86.5" stroke="#868686" stroke-width="2.6"/><circle cx="99.5" cy="553.6" r="10.6" fill="none" stroke="#868686" stroke-width="2.6"/><path d="M95 549.5 L98.3 552.3 L95 555.2 M104 547.5 L100.7 550.3 L104 553.2" fill="none" stroke="#868686" stroke-width="1.8"/><path d="M66.6 624.6 H82.6 V643.3 H101.4 V660.4 H66.6 Z M82.6 643.3 H66.6 M82.6 643.3 V660.4" fill="none" stroke="#868686" stroke-width="2.6" stroke-linejoin="round"/><rect x="93" y="615.3" width="17.4" height="17.8" rx="2" fill="none" stroke="#868686" stroke-width="2.6"/><path d="M79 714.4 H97.5 M82.5 714.4 V728 L71 751 Q70.2 753.3 72.6 753.3 H103.6 Q106 753.3 105.2 751 L93.5 728 V714.4 M76.8 741.6 H99.4" fill="none" stroke="#868686" stroke-width="2.6" stroke-linejoin="round"/><circle cx="89.1" cy="829.1" r="13.3" fill="#868686"/><path d="M80.8 820.8 L77.5 810.8 M80.8 820.8 L69.6 818.6 M97.4 837.4 L107 839.7 M97.4 837.4 L99.3 848" stroke="#868686" stroke-width="7.4" stroke-linecap="round"/><path d="M89.1 829.1 Q84.01 825.92 82.08 820.12 A11.4 11.4 0 0 1 88.30 817.73 Q85.74 824.13 89.1 829.1 Z M89.1 829.1 Q89.31 823.10 93.37 818.53 A11.4 11.4 0 0 1 98.55 822.73 Q91.73 823.71 89.1 829.1 Z M89.1 829.1 Q94.40 826.28 100.39 827.51 A11.4 11.4 0 0 1 99.35 834.10 Q95.09 828.68 89.1 829.1 Z M89.1 829.1 Q94.19 832.28 96.12 838.08 A11.4 11.4 0 0 1 89.90 840.47 Q92.46 834.07 89.1 829.1 Z M89.1 829.1 Q88.89 835.10 84.83 839.67 A11.4 11.4 0 0 1 79.65 835.47 Q86.47 834.49 89.1 829.1 Z M89.1 829.1 Q83.80 831.92 77.81 830.69 A11.4 11.4 0 0 1 78.85 824.10 Q83.11 829.52 89.1 829.1 Z" fill="#181818"/><path d="M105.6 919 V907.3 Q105.6 905.9 104.2 905.9 H70 Q68.6 905.9 68.6 907.3 V929 Q68.6 930.4 70 930.4 H71.8 V939.5 L79 930.4 H80" fill="none" stroke="#868686" stroke-width="2.6" stroke-linejoin="round"/><path d="M85 923.8 H106.4 Q107.7 923.8 107.7 925.2 V938.6 Q107.7 940 106.4 940 H101.6 V945 L96.8 940 H85 Q83.6 940 83.6 938.6 V925.2 Q83.6 923.8 85 923.8 Z" fill="none" stroke="#868686" stroke-width="2.6" stroke-linejoin="round"/><path d="M88.8 1040.9 H73.2 Q71.2 1040.9 71.2 1038.9 V1003.7 Q71.2 1001.7 73.2 1001.7 H96.5 L105 1010.4 V1021.6" fill="none" stroke="#868686" stroke-width="3.5"/><path d="M94.6 1000 L106.8 1012.2 H94.6 Z" fill="#868686"/><path d="M88.69 1013.15 A7.3 7.3 0 1 0 88.69 1024.65" fill="none" stroke="#868686" stroke-width="3.2"/><path d="M84.2 1018.9 H90.4 M87.3 1015.8 V1022 M92 1018.9 H98.2 M95.1 1015.8 V1022" stroke="#868686" stroke-width="1.9"/><path d="M108.88 1035.40 L112.06 1037.66 L110.75 1040.84 L106.90 1040.19 L106.19 1040.90 L106.84 1044.75 L103.66 1046.06 L101.40 1042.88 L100.40 1042.88 L98.14 1046.06 L94.96 1044.75 L95.61 1040.90 L94.90 1040.19 L91.05 1040.84 L89.74 1037.66 L92.92 1035.40 L92.92 1034.40 L89.74 1032.14 L91.05 1028.96 L94.90 1029.61 L95.61 1028.90 L94.96 1025.05 L98.14 1023.74 L100.40 1026.92 L101.40 1026.92 L103.66 1023.74 L106.84 1025.05 L106.19 1028.90 L106.90 1029.61 L110.75 1028.96 L112.06 1032.14 L108.88 1034.40 Z M104.80000000000001 1034.9 A3.9 3.9 0 1 0 97.0 1034.9 A3.9 3.9 0 1 0 104.80000000000001 1034.9 Z" fill="#868686" fill-rule="evenodd" stroke="#868686" stroke-width="0.8" stroke-linejoin="round"/><circle cx="88" cy="1458" r="22.8" fill="none" stroke="#868686" stroke-width="2.6"/><circle cx="88" cy="1452.3" r="9.6" fill="none" stroke="#868686" stroke-width="2.8"/><path d="M74 1474.5 Q78 1464.4 88 1464.4 Q98 1464.4 102 1474.5" fill="none" stroke="#868686" stroke-width="2.8"/><path d="M83.3 1538.4 L84.7 1530.9 L91.3 1530.9 L92.7 1538.4 L95.4 1539.5 L101.6 1535.2 L106.3 1539.9 L102.0 1546.1 L103.1 1548.8 L110.6 1550.2 L110.6 1556.8 L103.1 1558.2 L102.0 1560.9 L106.3 1567.1 L101.6 1571.8 L95.4 1567.5 L92.7 1568.6 L91.3 1576.1 L84.7 1576.1 L83.3 1568.6 L80.6 1567.5 L74.4 1571.8 L69.7 1567.1 L74.0 1560.9 L72.9 1558.2 L65.4 1556.8 L65.4 1550.2 L72.9 1548.8 L74.0 1546.1 L69.7 1539.9 L74.4 1535.2 L80.6 1539.5 Z" fill="none" stroke="#868686" stroke-width="3" stroke-linejoin="miter"/><circle cx="88" cy="1553.5" r="5.4" fill="none" stroke="#868686" stroke-width="3.2"/><circle cx="104" cy="1570" r="16" fill="#0078d4"/></svg>
<div style="position:absolute;left:98.6px;top:450.75px;height:22px;line-height:22px;font-family:'Liberation Sans', sans-serif;font-size:18.6px;font-weight:700;color:#ffffff;white-space:pre;-webkit-text-stroke:0.3px #ffffff;">4</div>
<div style="position:absolute;left:98.6px;top:1559.2px;height:21px;line-height:21px;font-family:'Liberation Sans', sans-serif;font-size:17.6px;font-weight:700;color:#ffffff;white-space:pre;-webkit-text-stroke:0.3px #ffffff;">1</div>
<div style="position:absolute;left:690px;top:110px;width:2px;height:1492px;background:#2b2b2b;"></div>
<div style="position:absolute;left:176.5px;top:132.87px;height:26px;line-height:26px;font-family:'Liberation Sans', sans-serif;font-size:22px;font-weight:400;color:#cccccc;white-space:pre;-webkit-text-stroke:0.3px #cccccc;">RUN AND D...</div>
<div style="position:absolute;left:336px;top:122px;width:226px;height:46px;background:#313131;border:2px solid #3c3c3c;border-radius:7px;"></div>
<div style="position:absolute;left:378px;top:124px;width:2px;height:42px;background:#3c3c3c;"></div>
<div style="position:absolute;left:380px;top:124px;width:136.5px;height:42px;overflow:hidden;"><div style="position:absolute;left:12.3px;top:7.94px;height:28px;line-height:28px;font-family:'Liberation Sans', sans-serif;font-size:23.55px;font-weight:400;color:#cccccc;white-space:pre;-webkit-text-stroke:0.3px #cccccc;">Attach to iO</div></div>
<svg style="position:absolute;left:0px;top:0px;" width="2638" height="1686" viewBox="0 0 2638 1686"><path d="M351.5 135 L368 145.7 L351.5 156.4 Z" fill="none" stroke="#89d185" stroke-width="3" stroke-linejoin="round"/><path d="M522.5 140.5 L532 150.5 L541.5 140.5" fill="none" stroke="#cccccc" stroke-width="2.4"/><path d="M589.5 136.8 L590.0 131.8 L594.0 131.8 L594.5 136.8 L596.0 137.4 L600.0 134.2 L602.8 137.0 L599.6 141.0 L600.2 142.5 L605.2 143.0 L605.2 147.0 L600.2 147.5 L599.6 149.0 L602.8 153.0 L600.0 155.8 L596.0 152.6 L594.5 153.2 L594.0 158.2 L590.0 158.2 L589.5 153.2 L588.0 152.6 L584.0 155.8 L581.2 153.0 L584.4 149.0 L583.8 147.5 L578.8 147.0 L578.8 143.0 L583.8 142.5 L584.4 141.0 L581.2 137.0 L584.0 134.2 L588.0 137.4 Z" fill="none" stroke="#cccccc" stroke-width="2.2" stroke-linejoin="round"/><circle cx="592" cy="145" r="3.4" fill="none" stroke="#cccccc" stroke-width="2.2"/><circle cx="634" cy="145.5" r="2.15" fill="#cccccc"/><circle cx="644" cy="145.5" r="2.15" fill="#cccccc"/><circle cx="654" cy="145.5" r="2.15" fill="#cccccc"/><path d="M146.5 197 L156 207 L165.5 197" fill="none" stroke="#cccccc" stroke-width="2.2"/><path d="M146.5 483 L156 493 L165.5 483" fill="none" stroke="#cccccc" stroke-width="2.2"/><path d="M146.5 1277 L156 1287 L165.5 1277" fill="none" stroke="#cccccc" stroke-width="2.2"/><path d="M152 1571.5 L161.5 1581 L152 1590.5" fill="none" stroke="#cccccc" stroke-width="2.2"/></svg>
<div style="position:absolute;left:176.5px;top:189.37px;height:26px;line-height:26px;font-family:'Liberation Sans', sans-serif;font-size:22px;font-weight:700;color:#cccccc;white-space:pre;-webkit-text-stroke:0.3px #cccccc;">VARIABLES</div>
<div style="position:absolute;left:136px;top:464px;width:554px;height:2px;background:#2b2b2b;"></div>
<div style="position:absolute;left:177px;top:474.26px;height:27px;line-height:27px;font-family:'Liberation Sans', sans-serif;font-size:22.6px;font-weight:700;color:#cccccc;white-space:pre;-webkit-text-stroke:0.3px #cccccc;">WATCH</div>
<div style="position:absolute;left:136px;top:1258px;width:554px;height:2px;background:#2b2b2b;"></div>
<div style="position:absolute;left:177px;top:1268.67px;height:26px;line-height:26px;font-family:'Liberation Sans', sans-serif;font-size:22px;font-weight:700;color:#cccccc;white-space:pre;-webkit-text-stroke:0.3px #cccccc;">CALL STACK</div>
<div style="position:absolute;left:136px;top:1558px;width:554px;height:2px;background:#2b2b2b;"></div>
<div style="position:absolute;left:177px;top:1568.87px;height:26px;line-height:26px;font-family:'Liberation Sans', sans-serif;font-size:22px;font-weight:700;color:#cccccc;white-space:pre;-webkit-text-stroke:0.3px #cccccc;">BREAKPOINTS</div>
<div style="position:absolute;left:692px;top:110px;width:1906px;height:1492px;background:#1f1f1f;"></div>
<div style="position:absolute;left:692px;top:110px;width:1906px;height:70px;background:#181818;"></div>
<div style="position:absolute;left:692px;top:178px;width:1906px;height:2px;background:#2b2b2b;"></div>
<div style="position:absolute;left:692px;top:110px;width:258px;height:70px;background:#1f1f1f;"></div>
<div style="position:absolute;left:692px;top:110px;width:258px;height:2px;background:#0078d4;"></div>
<div style="position:absolute;left:950px;top:110px;width:2px;height:70px;background:#2b2b2b;"></div>
<div style="position:absolute;left:720px;top:130.33px;height:30px;line-height:30px;font-family:'Liberation Sans', sans-serif;font-size:25px;font-weight:400;color:#cbcb41;white-space:pre;letter-spacing:5px;-webkit-text-stroke:0.3px #cbcb41;">{}</div>
<div style="position:absolute;left:757.6px;top:129.74px;height:32px;line-height:32px;font-family:'Liberation Sans', sans-serif;font-size:26.7px;font-weight:400;color:#999999;white-space:pre;-webkit-text-stroke:0.3px #999999;">launch.json</div>
<svg style="position:absolute;left:0px;top:0px;" width="2638" height="1686" viewBox="0 0 2638 1686"><path d="M913.5 136.8 L930 153.3 M930 136.8 L913.5 153.3" stroke="#ffffff" stroke-width="2.3"/><path d="M439 134 L457 145.8 L439 157.6 Z" fill="none" stroke="#cccccc" stroke-width="2.2" stroke-linejoin="round" transform="translate(2000 0)"/><rect x="2489" y="132" width="24" height="24" rx="3" fill="none" stroke="#cccccc" stroke-width="2.2"/><path d="M2501 132 V156" stroke="#cccccc" stroke-width="2.2"/><circle cx="2542" cy="145" r="2.15" fill="#cccccc"/><circle cx="2552" cy="145" r="2.15" fill="#cccccc"/><circle cx="2562" cy="145" r="2.15" fill="#cccccc"/><path d="M828.5 194.5 L838.5 204.5 L828.5 214.5 M1042.5 194.5 L1052.5 204.5 L1042.5 214.5" fill="none" stroke="#a9a9a9" stroke-width="2"/></svg>
<div style="position:absolute;left:724px;top:187.12px;height:31px;line-height:31px;font-family:'Liberation Sans', sans-serif;font-size:26.2px;font-weight:400;color:#a9a9a9;white-space:pre;-webkit-text-stroke:0.3px #a9a9a9;">.vscode</div>
<div style="position:absolute;left:857px;top:187.01px;height:29px;line-height:29px;font-family:'Liberation Sans', sans-serif;font-size:24.5px;font-weight:400;color:#cbcb41;white-space:pre;letter-spacing:5px;-webkit-text-stroke:0.3px #cbcb41;">{}</div>
<div style="position:absolute;left:893.5px;top:186.37px;height:32px;line-height:32px;font-family:'Liberation Sans', sans-serif;font-size:26.9px;font-weight:400;color:#a9a9a9;white-space:pre;-webkit-text-stroke:0.3px #a9a9a9;">launch.json</div>
<div style="position:absolute;left:1062px;top:187.12px;height:31px;line-height:31px;font-family:'Liberation Sans', sans-serif;font-size:26.2px;font-weight:400;color:#a9a9a9;white-space:pre;-webkit-text-stroke:0.3px #a9a9a9;">...</div>
<div style="position:absolute;left:824px;top:656px;width:1746px;height:36px;background:transparent;border-top:4px solid #282828;border-bottom:4px solid #282828;"></div>
<div style="position:absolute;left:757.05px;top:228.69px;height:29px;line-height:29px;font-family:'Liberation Mono', monospace;font-size:24.08px;font-weight:400;color:#6e7681;white-space:pre;transform:scale(1.0,1.08);transform-origin:0 20.91px;-webkit-text-stroke:0.3px #6e7681;">1</div>
<div style="position:absolute;left:757.05px;top:264.69px;height:29px;line-height:29px;font-family:'Liberation Mono', monospace;font-size:24.08px;font-weight:400;color:#6e7681;white-space:pre;transform:scale(1.0,1.08);transform-origin:0 20.91px;-webkit-text-stroke:0.3px #6e7681;">2</div>
<div style="position:absolute;left:757.05px;top:300.69px;height:29px;line-height:29px;font-family:'Liberation Mono', monospace;font-size:24.08px;font-weight:400;color:#6e7681;white-space:pre;transform:scale(1.0,1.08);transform-origin:0 20.91px;-webkit-text-stroke:0.3px #6e7681;">3</div>
<div style="position:absolute;left:757.05px;top:336.69px;height:29px;line-height:29px;font-family:'Liberation Mono', monospace;font-size:24.08px;font-weight:400;color:#6e7681;white-space:pre;transform:scale(1.0,1.08);transform-origin:0 20.91px;-webkit-text-stroke:0.3px #6e7681;">4</div>
<div style="position:absolute;left:757.05px;top:372.69px;height:29px;line-height:29px;font-family:'Liberation Mono', monospace;font-size:24.08px;font-weight:400;color:#6e7681;white-space:pre;transform:scale(1.0,1.08);transform-origin:0 20.91px;-webkit-text-stroke:0.3px #6e7681;">5</div>
<div style="position:absolute;left:757.05px;top:408.69px;height:29px;line-height:29px;font-family:'Liberation Mono', monospace;font-size:24.08px;font-weight:400;color:#6e7681;white-space:pre;transform:scale(1.0,1.08);transform-origin:0 20.91px;-webkit-text-stroke:0.3px #6e7681;">6</div>
<div style="position:absolute;left:757.05px;top:444.69px;height:29px;line-height:29px;font-family:'Liberation Mono', monospace;font-size:24.08px;font-weight:400;color:#6e7681;white-space:pre;transform:scale(1.0,1.08);transform-origin:0 20.91px;-webkit-text-stroke:0.3px #6e7681;">7</div>
<div style="position:absolute;left:757.05px;top:480.69px;height:29px;line-height:29px;font-family:'Liberation Mono', monospace;font-size:24.08px;font-weight:400;color:#6e7681;white-space:pre;transform:scale(1.0,1.08);transform-origin:0 20.91px;-webkit-text-stroke:0.3px #6e7681;">8</div>
<div style="position:absolute;left:757.05px;top:516.69px;height:29px;line-height:29px;font-family:'Liberation Mono', monospace;font-size:24.08px;font-weight:400;color:#6e7681;white-space:pre;transform:scale(1.0,1.08);transform-origin:0 20.91px;-webkit-text-stroke:0.3px #6e7681;">9</div>
<div style="position:absolute;left:742.6px;top:552.69px;height:29px;line-height:29px;font-family:'Liberation Mono', monospace;font-size:24.08px;font-weight:400;color:#6e7681;white-space:pre;transform:scale(1.0,1.08);transform-origin:0 20.91px;-webkit-text-stroke:0.3px #6e7681;">10</div>
<div style="position:absolute;left:742.6px;top:588.69px;height:29px;line-height:29px;font-family:'Liberation Mono', monospace;font-size:24.08px;font-weight:400;color:#6e7681;white-space:pre;transform:scale(1.0,1.08);transform-origin:0 20.91px;-webkit-text-stroke:0.3px #6e7681;">11</div>
<div style="position:absolute;left:742.6px;top:624.69px;height:29px;line-height:29px;font-family:'Liberation Mono', monospace;font-size:24.08px;font-weight:400;color:#6e7681;white-space:pre;transform:scale(1.0,1.08);transform-origin:0 20.91px;-webkit-text-stroke:0.3px #6e7681;">12</div>
<div style="position:absolute;left:742.6px;top:660.69px;height:29px;line-height:29px;font-family:'Liberation Mono', monospace;font-size:24.08px;font-weight:400;color:#cccccc;white-space:pre;transform:scale(1.0,1.08);transform-origin:0 20.91px;-webkit-text-stroke:0.3px #cccccc;">13</div>
<div style="position:absolute;left:824.5px;top:228.69px;height:29px;line-height:29px;font-family:'Liberation Mono', monospace;font-size:24.08px;font-weight:400;color:#ffd700;white-space:pre;transform:scale(1.0,1.08);transform-origin:0 20.91px;-webkit-text-stroke:0.45px #ffd700;">{</div>
<div style="position:absolute;left:853.4px;top:264.69px;height:29px;line-height:29px;font-family:'Liberation Mono', monospace;font-size:24.08px;font-weight:400;color:#9cdcfe;white-space:pre;transform:scale(1.0,1.08);transform-origin:0 20.91px;-webkit-text-stroke:0.45px #9cdcfe;">"version"</div>
<div style="position:absolute;left:983.45px;top:264.69px;height:29px;line-height:29px;font-family:'Liberation Mono', monospace;font-size:24.08px;font-weight:400;color:#cccccc;white-space:pre;transform:scale(1.0,1.08);transform-origin:0 20.91px;-webkit-text-stroke:0.45px #cccccc;">: </div>
<div style="position:absolute;left:1012.35px;top:264.69px;height:29px;line-height:29px;font-family:'Liberation Mono', monospace;font-size:24.08px;font-weight:400;color:#ce9178;white-space:pre;transform:scale(1.0,1.08);transform-origin:0 20.91px;-webkit-text-stroke:0.45px #ce9178;">"0.2.0"</div>
<div style="position:absolute;left:1113.5px;top:264.69px;height:29px;line-height:29px;font-family:'Liberation Mono', monospace;font-size:24.08px;font-weight:400;color:#cccccc;white-space:pre;transform:scale(1.0,1.08);transform-origin:0 20.91px;-webkit-text-stroke:0.45px #cccccc;">,</div>
<div style="position:absolute;left:853.4px;top:300.69px;height:29px;line-height:29px;font-family:'Liberation Mono', monospace;font-size:24.08px;font-weight:400;color:#9cdcfe;white-space:pre;transform:scale(1.0,1.08);transform-origin:0 20.91px;-webkit-text-stroke:0.45px #9cdcfe;">"configurations"</div>
<div style="position:absolute;left:1084.6px;top:300.69px;height:29px;line-height:29px;font-family:'Liberation Mono', monospace;font-size:24.08px;font-weight:400;color:#cccccc;white-space:pre;transform:scale(1.0,1.08);transform-origin:0 20.91px;-webkit-text-stroke:0.45px #cccccc;">: </div>
<div style="position:absolute;left:1113.5px;top:300.69px;height:29px;line-height:29px;font-family:'Liberation Mono', monospace;font-size:24.08px;font-weight:400;color:#da70d6;white-space:pre;transform:scale(1.0,1.08);transform-origin:0 20.91px;-webkit-text-stroke:0.45px #da70d6;">[</div>
<div style="position:absolute;left:882.3px;top:336.69px;height:29px;line-height:29px;font-family:'Liberation Mono', monospace;font-size:24.08px;font-weight:400;color:#179fff;white-space:pre;transform:scale(1.0,1.08);transform-origin:0 20.91px;-webkit-text-stroke:0.45px #179fff;">{</div>
<div style="position:absolute;left:911.2px;top:372.69px;height:29px;line-height:29px;font-family:'Liberation Mono', monospace;font-size:24.08px;font-weight:400;color:#9cdcfe;white-space:pre;transform:scale(1.0,1.08);transform-origin:0 20.91px;-webkit-text-stroke:0.45px #9cdcfe;">"type"</div>
<div style="position:absolute;left:997.9px;top:372.69px;height:29px;line-height:29px;font-family:'Liberation Mono', monospace;font-size:24.08px;font-weight:400;color:#cccccc;white-space:pre;transform:scale(1.0,1.08);transform-origin:0 20.91px;-webkit-text-stroke:0.45px #cccccc;">: </div>
<div style="position:absolute;left:1026.8px;top:372.69px;height:29px;line-height:29px;font-family:'Liberation Mono', monospace;font-size:24.08px;font-weight:400;color:#ce9178;white-space:pre;transform:scale(1.0,1.08);transform-origin:0 20.91px;-webkit-text-stroke:0.45px #ce9178;">"lldb"</div>
<div style="position:absolute;left:1113.5px;top:372.69px;height:29px;line-height:29px;font-family:'Liberation Mono', monospace;font-size:24.08px;font-weight:400;color:#cccccc;white-space:pre;transform:scale(1.0,1.08);transform-origin:0 20.91px;-webkit-text-stroke:0.45px #cccccc;">,</div>
<div style="position:absolute;left:911.2px;top:408.69px;height:29px;line-height:29px;font-family:'Liberation Mono', monospace;font-size:24.08px;font-weight:400;color:#9cdcfe;white-space:pre;transform:scale(1.0,1.08);transform-origin:0 20.91px;-webkit-text-stroke:0.45px #9cdcfe;">"request"</div>
<div style="position:absolute;left:1041.25px;top:408.69px;height:29px;line-height:29px;font-family:'Liberation Mono', monospace;font-size:24.08px;font-weight:400;color:#cccccc;white-space:pre;transform:scale(1.0,1.08);transform-origin:0 20.91px;-webkit-text-stroke:0.45px #cccccc;">: </div>
<div style="position:absolute;left:1070.15px;top:408.69px;height:29px;line-height:29px;font-family:'Liberation Mono', monospace;font-size:24.08px;font-weight:400;color:#ce9178;white-space:pre;transform:scale(1.0,1.08);transform-origin:0 20.91px;-webkit-text-stroke:0.45px #ce9178;">"attach"</div>
<div style="position:absolute;left:1185.75px;top:408.69px;height:29px;line-height:29px;font-family:'Liberation Mono', monospace;font-size:24.08px;font-weight:400;color:#cccccc;white-space:pre;transform:scale(1.0,1.08);transform-origin:0 20.91px;-webkit-text-stroke:0.45px #cccccc;">,</div>
<div style="position:absolute;left:911.2px;top:444.69px;height:29px;line-height:29px;font-family:'Liberation Mono', monospace;font-size:24.08px;font-weight:400;color:#9cdcfe;white-space:pre;transform:scale(1.0,1.08);transform-origin:0 20.91px;-webkit-text-stroke:0.45px #9cdcfe;">"name"</div>
<div style="position:absolute;left:997.9px;top:444.69px;height:29px;line-height:29px;font-family:'Liberation Mono', monospace;font-size:24.08px;font-weight:400;color:#cccccc;white-space:pre;transform:scale(1.0,1.08);transform-origin:0 20.91px;-webkit-text-stroke:0.45px #cccccc;">: </div>
<div style="position:absolute;left:1026.8px;top:444.69px;height:29px;line-height:29px;font-family:'Liberation Mono', monospace;font-size:24.08px;font-weight:400;color:#ce9178;white-space:pre;transform:scale(1.0,1.08);transform-origin:0 20.91px;-webkit-text-stroke:0.45px #ce9178;">"Attach to iOS Simulator"</div>
<div style="position:absolute;left:1388.05px;top:444.69px;height:29px;line-height:29px;font-family:'Liberation Mono', monospace;font-size:24.08px;font-weight:400;color:#cccccc;white-space:pre;transform:scale(1.0,1.08);transform-origin:0 20.91px;-webkit-text-stroke:0.45px #cccccc;">,</div>
<div style="position:absolute;left:911.2px;top:480.69px;height:29px;line-height:29px;font-family:'Liberation Mono', monospace;font-size:24.08px;font-weight:400;color:#9cdcfe;white-space:pre;transform:scale(1.0,1.08);transform-origin:0 20.91px;-webkit-text-stroke:0.45px #9cdcfe;">"waitFor"</div>
<div style="position:absolute;left:1041.25px;top:480.69px;height:29px;line-height:29px;font-family:'Liberation Mono', monospace;font-size:24.08px;font-weight:400;color:#cccccc;white-space:pre;transform:scale(1.0,1.08);transform-origin:0 20.91px;-webkit-text-stroke:0.45px #cccccc;">: </div>
<div style="position:absolute;left:1070.15px;top:480.69px;height:29px;line-height:29px;font-family:'Liberation Mono', monospace;font-size:24.08px;font-weight:400;color:#569cd6;white-space:pre;transform:scale(1.0,1.08);transform-origin:0 20.91px;-webkit-text-stroke:0.45px #569cd6;">true</div>
<div style="position:absolute;left:1127.95px;top:480.69px;height:29px;line-height:29px;font-family:'Liberation Mono', monospace;font-size:24.08px;font-weight:400;color:#cccccc;white-space:pre;transform:scale(1.0,1.08);transform-origin:0 20.91px;-webkit-text-stroke:0.45px #cccccc;">,</div>
<div style="position:absolute;left:911.2px;top:516.69px;height:29px;line-height:29px;font-family:'Liberation Mono', monospace;font-size:24.08px;font-weight:400;color:#9cdcfe;white-space:pre;transform:scale(1.0,1.08);transform-origin:0 20.91px;-webkit-text-stroke:0.45px #9cdcfe;">"program"</div>
<div style="position:absolute;left:1041.25px;top:516.69px;height:29px;line-height:29px;font-family:'Liberation Mono', monospace;font-size:24.08px;font-weight:400;color:#cccccc;white-space:pre;transform:scale(1.0,1.08);transform-origin:0 20.91px;-webkit-text-stroke:0.45px #cccccc;">: </div>
<div style="position:absolute;left:1070.15px;top:516.69px;height:29px;line-height:29px;font-family:'Liberation Mono', monospace;font-size:24.08px;font-weight:400;color:#ce9178;white-space:pre;transform:scale(1.0,1.08);transform-origin:0 20.91px;-webkit-text-stroke:0.45px #ce9178;">"${command:sweetpad.debugger.getAppPath}"</div>
<div style="position:absolute;left:882.3px;top:552.69px;height:29px;line-height:29px;font-family:'Liberation Mono', monospace;font-size:24.08px;font-weight:400;color:#179fff;white-space:pre;transform:scale(1.0,1.08);transform-origin:0 20.91px;-webkit-text-stroke:0.45px #179fff;">}</div>
<div style="position:absolute;left:853.4px;top:588.69px;height:29px;line-height:29px;font-family:'Liberation Mono', monospace;font-size:24.08px;font-weight:400;color:#da70d6;white-space:pre;transform:scale(1.0,1.08);transform-origin:0 20.91px;-webkit-text-stroke:0.45px #da70d6;">]</div>
<div style="position:absolute;left:824.5px;top:624.69px;height:29px;line-height:29px;font-family:'Liberation Mono', monospace;font-size:24.08px;font-weight:400;color:#ffd700;white-space:pre;transform:scale(1.0,1.08);transform-origin:0 20.91px;-webkit-text-stroke:0.45px #ffd700;">}</div>
<div style="position:absolute;left:824px;top:260px;width:2px;height:360px;background:#404040;"></div>
<div style="position:absolute;left:882px;top:368px;width:2px;height:180px;background:#404040;"></div>
<svg style="position:absolute;left:0px;top:0px;" width="2638" height="1686" viewBox="0 0 2638 1686"><path d="M850 621.5999999999999 Q852.6 629.1999999999999 860.2 631.8 Q852.6 634.4 850 642.0 Q847.4 634.4 839.8 631.8 Q847.4 629.1999999999999 850 621.5999999999999 Z" fill="#f9c940" stroke="#f9c940" stroke-width="1.2" stroke-linejoin="round"/><path d="M861.8 637.5999999999999 Q863.4 642.1999999999999 868.0 643.8 Q863.4 645.4 861.8 650.0 Q860.1999999999999 645.4 855.5999999999999 643.8 Q860.1999999999999 642.1999999999999 861.8 637.5999999999999 Z" fill="#f9c940" stroke="#f9c940" stroke-width="1" stroke-linejoin="round"/></svg>
<div style="position:absolute;left:824px;top:656px;width:3px;height:36px;background:#aeafad;"></div>
<div style="position:absolute;left:870px;top:325px;width:922px;height:273px;background:transparent;border:6px solid #f93b4b;border-radius:2px;"></div>
<div style="position:absolute;left:2558px;top:224px;width:2px;height:1378px;background:#555555;"></div>
<div style="position:absolute;left:2570px;top:224px;width:28px;height:1378px;background:#1f1f1f;border-left:2px solid #181818;"></div>
<div style="position:absolute;left:2570px;top:224px;width:28px;height:1048px;background:#434343;"></div>
<div style="position:absolute;left:2571px;top:550px;width:27px;height:4px;background:#8a8a8a;"></div>
<div style="position:absolute;left:2255px;top:1494px;width:287px;height:60px;background:#0078d4;border-radius:4px;"></div>
<div style="position:absolute;left:2277.5px;top:1507.98px;height:33px;line-height:33px;font-family:'Liberation Sans', sans-serif;font-size:27.45px;font-weight:400;color:#ffffff;white-space:pre;-webkit-text-stroke:0.3px #ffffff;">Add Configuration...</div>
<div style="position:absolute;left:40px;top:1602px;width:2558px;height:44px;background:#181818;"></div>
<div style="position:absolute;left:40px;top:1602px;width:2558px;height:2px;background:#2b2b2b;"></div>
<div style="position:absolute;left:40px;top:1604px;width:68px;height:42px;background:#0078d4;"></div>
<svg style="position:absolute;left:0px;top:0px;" width="2638" height="1686" viewBox="0 0 2638 1686"><path d="M65.8 1619.5 L73.8 1627.5 L65.8 1635.5 M82.5 1612 L74.5 1620 L82.5 1628" fill="none" stroke="#ffffff" stroke-width="2.2"/><circle cx="128" cy="1614.5" r="4" fill="none" stroke="#cccccc" stroke-width="2.2"/><circle cx="128" cy="1633.5" r="4" fill="none" stroke="#cccccc" stroke-width="2.2"/><circle cx="140" cy="1619.5" r="4" fill="none" stroke="#cccccc" stroke-width="2.2"/><path d="M128 1618.5 V1629.5 M140 1623.5 Q140 1628 134 1628 Q128.5 1628 128 1631" fill="none" stroke="#cccccc" stroke-width="2.2"/><path d="M237.9 1618.6 A10 10 0 0 1 256 1624.5 M252.3 1622.3 L256 1626.2 L259.7 1622.3 M254.8 1629 A10 10 0 0 1 236.2 1625 M232.6 1625.6 L236.4 1621.8 L240.2 1625.6" fill="none" stroke="#cccccc" stroke-width="2.1"/><circle cx="302" cy="1624.2" r="11" fill="none" stroke="#cccccc" stroke-width="2.2"/><path d="M297 1619.2 L307 1629.2 M307 1619.2 L297 1629.2" stroke="#cccccc" stroke-width="2.2"/><path d="M359 1612.5 L371 1634 H347 Z" fill="none" stroke="#cccccc" stroke-width="2.2" stroke-linejoin="round"/><path d="M359 1620 V1628" stroke="#cccccc" stroke-width="2.2"/><circle cx="359" cy="1631" r="1.3" fill="#cccccc"/><path d="M441.4 1622 L435 1635.2 M441.4 1622 L447.8 1635.2 M437.2 1630 H445.6" fill="none" stroke="#cccccc" stroke-width="2"/><circle cx="441.4" cy="1619.6" r="2.4" fill="none" stroke="#cccccc" stroke-width="2"/><path d="M436.2 1613.5 Q432 1619.5 436.2 1625.5 M446.6 1613.5 Q450.8 1619.5 446.6 1625.5 M432 1611.5 Q425.5 1619.5 432 1627.5 M450.8 1611.5 Q457.3 1619.5 450.8 1627.5" fill="none" stroke="#cccccc" stroke-width="2"/><path d="M518 1625 V1614.5 L533.6 1624.6 L524.2 1631.2" fill="none" stroke="#cccccc" stroke-width="2"/><path d="M510.8 1630.5 Q510.8 1626.6 515.5 1626.6 Q520.2 1626.6 520.2 1630.5 V1633 Q520.2 1637 515.5 1637 Q510.8 1637 510.8 1633 Z M510.8 1630.3 H520.2" fill="none" stroke="#cccccc" stroke-width="2"/><path d="M507.5 1632.5 H510.8 M520.2 1632.5 H523.5 M508.3 1627.6 L511.2 1629.6 M522.7 1627.6 L519.8 1629.6 M508.3 1637.6 L511.2 1635.4 M522.7 1637.6 L519.8 1635.4" stroke="#cccccc" stroke-width="1.8"/><rect x="1177.5" y="1613" width="13.5" height="22" rx="1.5" fill="none" stroke="#cccccc" stroke-width="2"/><path d="M1182.5 1630.5 H1186" stroke="#cccccc" stroke-width="2"/><path d="M2334 1634 A10 10 0 0 1 2348 1616" fill="none" stroke="#cccccc" stroke-width="2"/><path d="M2393 1625 L2400 1633 L2414 1615" fill="none" stroke="#cccccc" stroke-width="2.2"/><path d="M2546 1629.5 V1622 A8.3 8.3 0 0 1 2562.6 1622 V1629.5 L2565 1632.5 H2543.5 Z" fill="none" stroke="#cccccc" stroke-width="2.2" stroke-linejoin="round"/><path d="M2551 1636 A3.5 3.5 0 0 0 2557.6 1636" fill="none" stroke="#cccccc" stroke-width="2.2"/></svg>
<div style="position:absolute;left:155.3px;top:1609.13px;height:30px;line-height:30px;font-family:'Liberation Sans', sans-serif;font-size:25px;font-weight:400;color:#cccccc;white-space:pre;-webkit-text-stroke:0.3px #cccccc;">main*</div>
<div style="position:absolute;left:323px;top:1609.13px;height:30px;line-height:30px;font-family:'Liberation Sans', sans-serif;font-size:25px;font-weight:400;color:#cccccc;white-space:pre;-webkit-text-stroke:0.3px #cccccc;">0</div>
<div style="position:absolute;left:379.5px;top:1609.13px;height:30px;line-height:30px;font-family:'Liberation Sans', sans-serif;font-size:25px;font-weight:400;color:#cccccc;white-space:pre;-webkit-text-stroke:0.3px #cccccc;">0</div>
<div style="position:absolute;left:462px;top:1609.13px;height:30px;line-height:30px;font-family:'Liberation Sans', sans-serif;font-size:25px;font-weight:400;color:#cccccc;white-space:pre;-webkit-text-stroke:0.3px #cccccc;">0</div>
<div style="position:absolute;left:543.5px;top:1608.42px;height:31px;line-height:31px;font-family:'Liberation Sans', sans-serif;font-size:25.6px;font-weight:400;color:#cccccc;white-space:pre;-webkit-text-stroke:0.3px #cccccc;">Attach to iOS Simulator (sweetpad-demo-xcodegen)</div>
<div style="position:absolute;left:1204px;top:1609.13px;height:30px;line-height:30px;font-family:'Liberation Sans', sans-serif;font-size:25px;font-weight:400;color:#cccccc;white-space:pre;-webkit-text-stroke:0.3px #cccccc;">iPhone SE (3rd generation)</div>
<div style="position:absolute;left:1709px;top:1609.13px;height:30px;line-height:30px;font-family:'Liberation Sans', sans-serif;font-size:25px;font-weight:400;color:#cccccc;white-space:pre;-webkit-text-stroke:0.3px #cccccc;">Spaces: 4</div>
<div style="position:absolute;left:1853px;top:1609.03px;height:30px;line-height:30px;font-family:'Liberation Sans', sans-serif;font-size:25.3px;font-weight:400;color:#cccccc;white-space:pre;-webkit-text-stroke:0.3px #cccccc;">UTF-8</div>
<div style="position:absolute;left:1958.5px;top:1609.13px;height:30px;line-height:30px;font-family:'Liberation Sans', sans-serif;font-size:25px;font-weight:400;color:#cccccc;white-space:pre;-webkit-text-stroke:0.3px #cccccc;">LF</div>
<div style="position:absolute;left:2016.5px;top:1609.18px;height:29px;line-height:29px;font-family:'Liberation Sans', sans-serif;font-size:24px;font-weight:400;color:#cccccc;white-space:pre;letter-spacing:5px;-webkit-text-stroke:0.3px #cccccc;">{}</div>
<div style="position:absolute;left:2054.5px;top:1609.13px;height:30px;line-height:30px;font-family:'Liberation Sans', sans-serif;font-size:25px;font-weight:400;color:#cccccc;white-space:pre;-webkit-text-stroke:0.3px #cccccc;">JSON with Comments</div>
<div style="position:absolute;left:2423.5px;top:1608.99px;height:30px;line-height:30px;font-family:'Liberation Sans', sans-serif;font-size:25.4px;font-weight:400;color:#cccccc;white-space:pre;-webkit-text-stroke:0.3px #cccccc;">Prettier</div>
</div>
<div style="position:absolute;left:0;top:0;width:2558px;height:1606px;border-radius:22px 22px 24px 24px;box-shadow:inset 0 1.5px 0 rgba(255,255,255,0.5);pointer-events:none;"></div>
</div>
</div></body></html>
